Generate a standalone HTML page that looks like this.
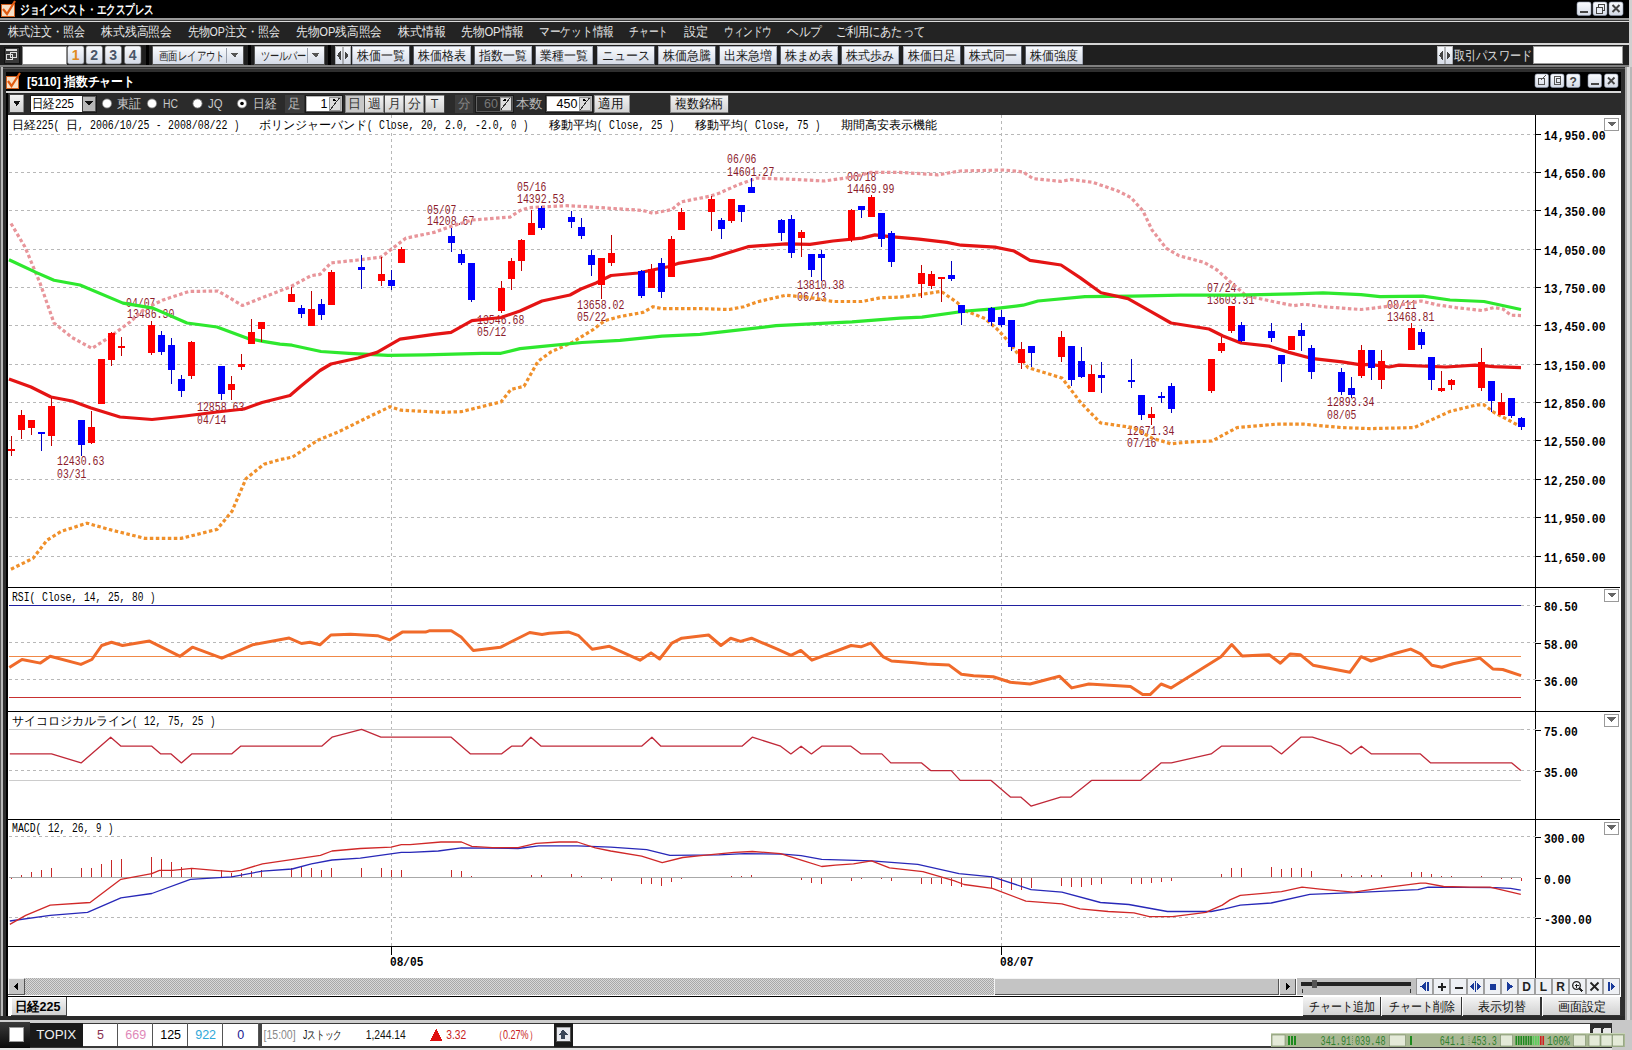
<!DOCTYPE html><html><head><meta charset="utf-8"><style>html,body{margin:0;padding:0;background:#000;overflow:hidden;width:1632px;height:1050px;}svg{display:block}</style></head><body>
<svg width="1632" height="1050" viewBox="0 0 1632 1050" shape-rendering="crispEdges">
<defs><pattern id="dith" width="2" height="2" patternUnits="userSpaceOnUse"><rect width="2" height="2" fill="#d8d8d8"/><rect width="1" height="1" fill="#a8a8a8"/><rect x="1" y="1" width="1" height="1" fill="#a8a8a8"/></pattern><linearGradient id="btn" x1="0" y1="0" x2="0" y2="1"><stop offset="0" stop-color="#fafcff"/><stop offset="1" stop-color="#d4dae6"/></linearGradient><linearGradient id="btn2" x1="0" y1="0" x2="0" y2="1"><stop offset="0" stop-color="#f4f4f4"/><stop offset="1" stop-color="#d0d0d0"/></linearGradient><linearGradient id="sbar" x1="0" y1="0" x2="0" y2="1"><stop offset="0" stop-color="#3a3a3a"/><stop offset="1" stop-color="#0a0a0a"/></linearGradient></defs>
<rect x="0" y="0" width="1632" height="18" fill="#000" />
<rect x="0" y="18" width="1632" height="1.5" fill="#9a9a9a" />
<rect x="0" y="19.5" width="1632" height="1" fill="#3a3a3a" />
<rect x="0" y="20.5" width="1632" height="1" fill="#dcdcdc" />
<rect x="0" y="21.5" width="1632" height="21.5" fill="#232323" />
<rect x="0" y="43" width="1632" height="2" fill="#d4d4d4" />
<rect x="0" y="45" width="1632" height="20" fill="#1f1f1f" />
<rect x="0" y="65" width="1632" height="2" fill="#808080" />
<rect x="1628.5" y="0" width="3.5" height="67" fill="#d0d0d0" />
<rect x="0" y="67" width="1632" height="983" fill="#2e2e2e" />
<rect x="0" y="67" width="1.3" height="983" fill="#5a5a5a" />
<rect x="1.3" y="67" width="1.3" height="983" fill="#b8b8b8" />
<rect x="1625" y="67" width="2" height="983" fill="#a8a8a8" />
<rect x="1627" y="67" width="2.5" height="983" fill="#dcdcdc" />
<rect x="1629.5" y="67" width="2.5" height="983" fill="#b8b8b8" />
<rect x="2.6" y="68" width="1622.4" height="1" fill="#555" />
<rect x="5.6" y="72" width="1615" height="19" fill="#000" />
<rect x="5.6" y="91" width="1615" height="1.5" fill="#d8d8d8" />
<rect x="5.6" y="92.5" width="1615" height="22.5" fill="#000" />
<rect x="8" y="92.5" width="1612.6" height="22.5" fill="#2b2b2b" />
<rect x="5.6" y="92.5" width="2.4" height="923.5" fill="#000" />
<rect x="8" y="115" width="1612.6" height="881" fill="#fff" />
<rect x="8" y="996" width="1612.6" height="20" fill="#fff" />
<rect x="0" y="1016" width="1625" height="4" fill="#2a2a2a" />
<rect x="0" y="1020" width="1632" height="2" fill="#c0c0c0" />
<rect x="0" y="1022" width="1632" height="28" fill="url(#sbar)"/>
<rect x="1" y="4" width="13" height="12" fill="#f6e0c8"/><rect x="1" y="4" width="13" height="12" fill="none" stroke="#d06020" stroke-width="1"/><path d="M3,9 L7,14 L15,1" fill="none" stroke="#e05a10" stroke-width="2.2" shape-rendering="auto"/>
<text x="20.00" y="13.50" font-family="'Liberation Sans',sans-serif" font-size="13" font-weight="bold" fill="#fff" textLength="134.00" lengthAdjust="spacingAndGlyphs">ジョインベスト・エクスプレス</text>
<rect x="1577" y="2" width="14" height="13.5" rx="2" fill="url(#btn)" stroke="#8a93a8" stroke-width="0.6" shape-rendering="auto"/>
<rect x="1580" y="11" width="8" height="2" fill="#444" />
<rect x="1593" y="2" width="14" height="13.5" rx="2" fill="url(#btn)" stroke="#8a93a8" stroke-width="0.6" shape-rendering="auto"/>
<rect x="1598" y="4.5" width="6" height="6" fill="none" stroke="#444" stroke-width="1"/><rect x="1596" y="7" width="6" height="6" fill="#e8ecf4" stroke="#444" stroke-width="1"/>
<rect x="1609" y="2" width="14" height="13.5" rx="2" fill="url(#btn)" stroke="#8a93a8" stroke-width="0.6" shape-rendering="auto"/>
<path d="M1612.5,5 L1619.5,12 M1619.5,5 L1612.5,12" stroke="#444" stroke-width="2" shape-rendering="auto"/>
<text x="7.50" y="36.00" font-family="'Liberation Sans',sans-serif" font-size="12.5" font-weight="normal" fill="#e6e6e6" textLength="77.50" lengthAdjust="spacingAndGlyphs">株式注文・照会</text>
<text x="101.00" y="36.00" font-family="'Liberation Sans',sans-serif" font-size="12.5" font-weight="normal" fill="#e6e6e6" textLength="71.00" lengthAdjust="spacingAndGlyphs">株式残高照会</text>
<text x="187.50" y="36.00" font-family="'Liberation Sans',sans-serif" font-size="12.5" font-weight="normal" fill="#e6e6e6" textLength="92.50" lengthAdjust="spacingAndGlyphs">先物OP注文・照会</text>
<text x="296.00" y="36.00" font-family="'Liberation Sans',sans-serif" font-size="12.5" font-weight="normal" fill="#e6e6e6" textLength="86.00" lengthAdjust="spacingAndGlyphs">先物OP残高照会</text>
<text x="398.00" y="36.00" font-family="'Liberation Sans',sans-serif" font-size="12.5" font-weight="normal" fill="#e6e6e6" textLength="48.00" lengthAdjust="spacingAndGlyphs">株式情報</text>
<text x="461.00" y="36.00" font-family="'Liberation Sans',sans-serif" font-size="12.5" font-weight="normal" fill="#e6e6e6" textLength="63.00" lengthAdjust="spacingAndGlyphs">先物OP情報</text>
<text x="539.00" y="36.00" font-family="'Liberation Sans',sans-serif" font-size="12.5" font-weight="normal" fill="#e6e6e6" textLength="75.00" lengthAdjust="spacingAndGlyphs">マーケット情報</text>
<text x="629.00" y="36.00" font-family="'Liberation Sans',sans-serif" font-size="12.5" font-weight="normal" fill="#e6e6e6" textLength="39.00" lengthAdjust="spacingAndGlyphs">チャート</text>
<text x="684.00" y="36.00" font-family="'Liberation Sans',sans-serif" font-size="12.5" font-weight="normal" fill="#e6e6e6" textLength="24.50" lengthAdjust="spacingAndGlyphs">設定</text>
<text x="724.00" y="36.00" font-family="'Liberation Sans',sans-serif" font-size="12.5" font-weight="normal" fill="#e6e6e6" textLength="48.00" lengthAdjust="spacingAndGlyphs">ウィンドウ</text>
<text x="787.00" y="36.00" font-family="'Liberation Sans',sans-serif" font-size="12.5" font-weight="normal" fill="#e6e6e6" textLength="35.00" lengthAdjust="spacingAndGlyphs">ヘルプ</text>
<text x="835.50" y="36.00" font-family="'Liberation Sans',sans-serif" font-size="12.5" font-weight="normal" fill="#e6e6e6" textLength="89.50" lengthAdjust="spacingAndGlyphs">ご利用にあたって</text>
<rect x="4" y="47" width="15" height="16" fill="#3a3a3a" stroke="#111" stroke-width="1"/><rect x="6" y="49" width="11" height="2" fill="#ddd"/><rect x="6" y="54" width="6" height="5" fill="none" stroke="#ddd" stroke-width="1"/><rect x="10" y="52" width="6" height="5" fill="none" stroke="#ddd" stroke-width="1"/>
<rect x="22.5" y="46" width="43.5" height="18" fill="#fff" stroke="#888" stroke-width="1"/>
<rect x="67.5" y="46" width="16.5" height="18" rx="2" fill="url(#btn)" stroke="#666" stroke-width="0.6" shape-rendering="auto"/>
<text x="75.75" y="60.00" font-family="'Liberation Sans',sans-serif" font-size="14" font-weight="bold" fill="#e08a20" text-anchor="middle">1</text>
<rect x="86" y="46" width="16.5" height="18" rx="2" fill="url(#btn)" stroke="#666" stroke-width="0.6" shape-rendering="auto"/>
<text x="94.25" y="60.00" font-family="'Liberation Sans',sans-serif" font-size="14" font-weight="bold" fill="#4a5668" text-anchor="middle">2</text>
<rect x="105" y="46" width="16.5" height="18" rx="2" fill="url(#btn)" stroke="#666" stroke-width="0.6" shape-rendering="auto"/>
<text x="113.25" y="60.00" font-family="'Liberation Sans',sans-serif" font-size="14" font-weight="bold" fill="#4a5668" text-anchor="middle">3</text>
<rect x="124.5" y="46" width="16.5" height="18" rx="2" fill="url(#btn)" stroke="#666" stroke-width="0.6" shape-rendering="auto"/>
<text x="132.75" y="60.00" font-family="'Liberation Sans',sans-serif" font-size="14" font-weight="bold" fill="#4a5668" text-anchor="middle">4</text>
<rect x="146" y="45" width="3" height="20" fill="#000" />
<rect x="247.6" y="45" width="3" height="20" fill="#000" />
<rect x="328" y="45" width="3" height="20" fill="#000" />
<rect x="152.9" y="46.4" width="90.1" height="18" fill="url(#btn)" stroke="#777" stroke-width="0.6"/>
<line x1="226.2" y1="48" x2="226.2" y2="63" stroke="#9aa0ac" stroke-width="1" />
<text x="158.90" y="59.90" font-family="'Liberation Sans',sans-serif" font-size="12" font-weight="normal" fill="#222" textLength="66.00" lengthAdjust="spacingAndGlyphs">画面レイアウト</text>
<path d="M230.2,52.5 L239.2,52.5 L234.7,57.5 Z" fill="#555"/>
<rect x="254.5" y="46.4" width="69.5" height="18" fill="url(#btn)" stroke="#777" stroke-width="0.6"/>
<line x1="307.3" y1="48" x2="307.3" y2="63" stroke="#9aa0ac" stroke-width="1" />
<text x="260.50" y="59.90" font-family="'Liberation Sans',sans-serif" font-size="12" font-weight="normal" fill="#222" textLength="46.00" lengthAdjust="spacingAndGlyphs">ツールバー</text>
<path d="M311.3,52.5 L320.3,52.5 L315.8,57.5 Z" fill="#555"/>
<rect x="335" y="46.4" width="7.5" height="18" fill="url(#btn)" stroke="#777" stroke-width="0.5"/><rect x="343" y="46.4" width="7.5" height="18" fill="url(#btn)" stroke="#777" stroke-width="0.5"/><path d="M340.5,51 L337,55.4 L340.5,60 Z" fill="#444"/><path d="M345,51 L348.5,55.4 L345,60 Z" fill="#444"/>
<rect x="352.3" y="46.4" width="57" height="18" fill="url(#btn)" stroke="#7a8090" stroke-width="0.6"/>
<text x="356.80" y="59.90" font-family="'Liberation Sans',sans-serif" font-size="12.5" font-weight="normal" fill="#1a1a1a" textLength="48.00" lengthAdjust="spacingAndGlyphs">株価一覧</text>
<rect x="413.5" y="46.4" width="57" height="18" fill="url(#btn)" stroke="#7a8090" stroke-width="0.6"/>
<text x="418.00" y="59.90" font-family="'Liberation Sans',sans-serif" font-size="12.5" font-weight="normal" fill="#1a1a1a" textLength="48.00" lengthAdjust="spacingAndGlyphs">株価格表</text>
<rect x="474.7" y="46.4" width="57" height="18" fill="url(#btn)" stroke="#7a8090" stroke-width="0.6"/>
<text x="479.20" y="59.90" font-family="'Liberation Sans',sans-serif" font-size="12.5" font-weight="normal" fill="#1a1a1a" textLength="48.00" lengthAdjust="spacingAndGlyphs">指数一覧</text>
<rect x="535.9" y="46.4" width="57" height="18" fill="url(#btn)" stroke="#7a8090" stroke-width="0.6"/>
<text x="540.40" y="59.90" font-family="'Liberation Sans',sans-serif" font-size="12.5" font-weight="normal" fill="#1a1a1a" textLength="48.00" lengthAdjust="spacingAndGlyphs">業種一覧</text>
<rect x="597.1" y="46.4" width="57" height="18" fill="url(#btn)" stroke="#7a8090" stroke-width="0.6"/>
<text x="601.60" y="59.90" font-family="'Liberation Sans',sans-serif" font-size="12.5" font-weight="normal" fill="#1a1a1a" textLength="48.00" lengthAdjust="spacingAndGlyphs">ニュース</text>
<rect x="658.3" y="46.4" width="57" height="18" fill="url(#btn)" stroke="#7a8090" stroke-width="0.6"/>
<text x="662.80" y="59.90" font-family="'Liberation Sans',sans-serif" font-size="12.5" font-weight="normal" fill="#1a1a1a" textLength="48.00" lengthAdjust="spacingAndGlyphs">株価急騰</text>
<rect x="719.5" y="46.4" width="57" height="18" fill="url(#btn)" stroke="#7a8090" stroke-width="0.6"/>
<text x="724.00" y="59.90" font-family="'Liberation Sans',sans-serif" font-size="12.5" font-weight="normal" fill="#1a1a1a" textLength="48.00" lengthAdjust="spacingAndGlyphs">出来急増</text>
<rect x="780.7" y="46.4" width="57" height="18" fill="url(#btn)" stroke="#7a8090" stroke-width="0.6"/>
<text x="785.20" y="59.90" font-family="'Liberation Sans',sans-serif" font-size="12.5" font-weight="normal" fill="#1a1a1a" textLength="48.00" lengthAdjust="spacingAndGlyphs">株まめ表</text>
<rect x="841.9" y="46.4" width="57" height="18" fill="url(#btn)" stroke="#7a8090" stroke-width="0.6"/>
<text x="846.40" y="59.90" font-family="'Liberation Sans',sans-serif" font-size="12.5" font-weight="normal" fill="#1a1a1a" textLength="48.00" lengthAdjust="spacingAndGlyphs">株式歩み</text>
<rect x="903.1" y="46.4" width="57" height="18" fill="url(#btn)" stroke="#7a8090" stroke-width="0.6"/>
<text x="907.60" y="59.90" font-family="'Liberation Sans',sans-serif" font-size="12.5" font-weight="normal" fill="#1a1a1a" textLength="48.00" lengthAdjust="spacingAndGlyphs">株価日足</text>
<rect x="964.3" y="46.4" width="57" height="18" fill="url(#btn)" stroke="#7a8090" stroke-width="0.6"/>
<text x="968.80" y="59.90" font-family="'Liberation Sans',sans-serif" font-size="12.5" font-weight="normal" fill="#1a1a1a" textLength="48.00" lengthAdjust="spacingAndGlyphs">株式同一</text>
<rect x="1025.5" y="46.4" width="57" height="18" fill="url(#btn)" stroke="#7a8090" stroke-width="0.6"/>
<text x="1030.00" y="59.90" font-family="'Liberation Sans',sans-serif" font-size="12.5" font-weight="normal" fill="#1a1a1a" textLength="48.00" lengthAdjust="spacingAndGlyphs">株価強度</text>
<rect x="1437" y="46.4" width="7.5" height="18" fill="url(#btn)" stroke="#777" stroke-width="0.5"/><rect x="1445" y="46.4" width="7.5" height="18" fill="url(#btn)" stroke="#777" stroke-width="0.5"/><path d="M1442.5,51 L1439,55.4 L1442.5,60 Z" fill="#444"/><path d="M1447,51 L1450.5,55.4 L1447,60 Z" fill="#444"/>
<text x="1454.00" y="59.90" font-family="'Liberation Sans',sans-serif" font-size="12.5" font-weight="normal" fill="#e0e0e0" textLength="78.00" lengthAdjust="spacingAndGlyphs">取引パスワード</text>
<rect x="1533.3" y="46.3" width="89.5" height="17.5" fill="#fff" stroke="#999" stroke-width="1"/>
<rect x="6" y="76" width="12" height="12" fill="#f6e0c8"/><rect x="6" y="76" width="12" height="12" fill="none" stroke="#d06020" stroke-width="1"/><path d="M8,81 L11.5,86 L20,73" fill="none" stroke="#e05a10" stroke-width="2.2" shape-rendering="auto"/>
<text x="27.00" y="85.50" font-family="'Liberation Sans',sans-serif" font-size="13" font-weight="bold" fill="#fff" textLength="108.00" lengthAdjust="spacingAndGlyphs">[5110] 指数チャート</text>
<rect x="1535" y="74" width="13.5" height="13.5" rx="2" fill="url(#btn)" stroke="#8a93a8" stroke-width="0.6" shape-rendering="auto"/>
<rect x="1538" y="78" width="6" height="6" fill="none" stroke="#555" stroke-width="1"/><path d="M1541,80 L1545.5,75.5" stroke="#555" stroke-width="1"/>
<rect x="1550.5" y="74" width="13.5" height="13.5" rx="2" fill="url(#btn)" stroke="#8a93a8" stroke-width="0.6" shape-rendering="auto"/>
<rect x="1554.0" y="76.5" width="6" height="8" fill="none" stroke="#555" stroke-width="1"/><rect x="1556.0" y="78.5" width="4" height="4" fill="none" stroke="#555" stroke-width="1"/>
<rect x="1566.5" y="74" width="13.5" height="13.5" rx="2" fill="url(#btn)" stroke="#8a93a8" stroke-width="0.6" shape-rendering="auto"/>
<text x="1573.25" y="85.50" font-family="'Liberation Sans',sans-serif" font-size="12" font-weight="bold" fill="#444" text-anchor="middle">?</text>
<rect x="1588" y="74" width="13.5" height="13.5" rx="2" fill="url(#btn)" stroke="#8a93a8" stroke-width="0.6" shape-rendering="auto"/>
<rect x="1591" y="83" width="7.5" height="2" fill="#444" />
<rect x="1604.5" y="74" width="13.5" height="13.5" rx="2" fill="url(#btn)" stroke="#8a93a8" stroke-width="0.6" shape-rendering="auto"/>
<path d="M1608.0,77.5 L1614.5,84 M1614.5,77.5 L1608.0,84" stroke="#444" stroke-width="1.8" shape-rendering="auto"/>
<rect x="9.8" y="94.5" width="14" height="17.5" fill="url(#btn2)" stroke="#555" stroke-width="0.6"/><path d="M13.3,101 L20.3,101 L16.8,106 Z" fill="#111"/>
<rect x="30" y="94.5" width="67" height="18" fill="#1a1a1a" />
<rect x="31" y="95.5" width="51" height="16" fill="#fff" />
<text x="32.00" y="107.50" font-family="'Liberation Sans',sans-serif" font-size="13" font-weight="normal" fill="#000" textLength="42.00" lengthAdjust="spacingAndGlyphs">日経225</text>
<rect x="82.5" y="96" width="13" height="15" fill="#b8b8b8" stroke="#444" stroke-width="0.8"/><path d="M84.8,101 L93.2,101 L89,106 Z" fill="#111"/>
<circle cx="107" cy="103.5" r="4.6" fill="#fff" stroke="#777" stroke-width="0.8" shape-rendering="auto"/>
<text x="117.00" y="108.00" font-family="'Liberation Sans',sans-serif" font-size="12.5" font-weight="normal" fill="#c8c8c8" textLength="24.50" lengthAdjust="spacingAndGlyphs">東証</text>
<circle cx="152" cy="103.5" r="4.6" fill="#fff" stroke="#777" stroke-width="0.8" shape-rendering="auto"/>
<text x="163.00" y="108.00" font-family="'Liberation Sans',sans-serif" font-size="12" font-weight="normal" fill="#c8c8c8" textLength="15.00" lengthAdjust="spacingAndGlyphs">HC</text>
<circle cx="197.5" cy="103.5" r="4.6" fill="#fff" stroke="#777" stroke-width="0.8" shape-rendering="auto"/>
<text x="208.00" y="108.00" font-family="'Liberation Sans',sans-serif" font-size="12" font-weight="normal" fill="#c8c8c8" textLength="14.50" lengthAdjust="spacingAndGlyphs">JQ</text>
<circle cx="242" cy="103.5" r="4.6" fill="#fff" stroke="#777" stroke-width="0.8" shape-rendering="auto"/>
<circle cx="242" cy="103.5" r="1.8" fill="#000" shape-rendering="auto"/>
<text x="252.80" y="108.00" font-family="'Liberation Sans',sans-serif" font-size="12.5" font-weight="normal" fill="#c8c8c8" textLength="23.50" lengthAdjust="spacingAndGlyphs">日経</text>
<rect x="284.5" y="95" width="19.5" height="18" fill="#3c3c3c" />
<text x="288.00" y="107.50" font-family="'Liberation Sans',sans-serif" font-size="12.5" font-weight="normal" fill="#bbb" textLength="12.50" lengthAdjust="spacingAndGlyphs">足</text>
<rect x="304.8" y="94.8" width="38.599999999999966" height="18" fill="#1a1a1a"/>
<rect x="306.3" y="96.3" width="35.599999999999966" height="15" fill="#fff" stroke="#888" stroke-width="0.6"/>
<text x="327.40" y="107.50" font-family="'Liberation Sans',sans-serif" font-size="12.5" font-weight="normal" fill="#000" text-anchor="end">1</text>
<rect x="329.4" y="97" width="11" height="13.5" fill="#ddd" stroke="#666" stroke-width="0.6"/><path d="M330.4,109.5 L339.4,98" stroke="#333" stroke-width="1"/><path d="M332.4,101 L334.2,98.5 L336.0,101 Z" fill="#000"/>
<rect x="345.4" y="95" width="18.600000000000023" height="17.8" fill="#c8c8c8" stroke="#555" stroke-width="0.6"/>
<text x="354.70" y="107.50" font-family="'Liberation Sans',sans-serif" font-size="12.5" font-weight="normal" fill="#333" text-anchor="middle">日</text>
<rect x="364.6" y="95" width="19.099999999999966" height="17.8" fill="url(#btn2)" stroke="#555" stroke-width="0.6"/>
<text x="374.15" y="107.50" font-family="'Liberation Sans',sans-serif" font-size="12.5" font-weight="normal" fill="#333" text-anchor="middle">週</text>
<rect x="384.8" y="95" width="18.69999999999999" height="17.8" fill="url(#btn2)" stroke="#555" stroke-width="0.6"/>
<text x="394.15" y="107.50" font-family="'Liberation Sans',sans-serif" font-size="12.5" font-weight="normal" fill="#333" text-anchor="middle">月</text>
<rect x="404.6" y="95" width="19.099999999999966" height="17.8" fill="url(#btn2)" stroke="#555" stroke-width="0.6"/>
<text x="414.15" y="107.50" font-family="'Liberation Sans',sans-serif" font-size="12.5" font-weight="normal" fill="#333" text-anchor="middle">分</text>
<rect x="425.2" y="95" width="18.80000000000001" height="17.8" fill="url(#btn2)" stroke="#555" stroke-width="0.6"/>
<text x="434.60" y="107.50" font-family="'Liberation Sans',sans-serif" font-size="12.5" font-weight="normal" fill="#333" text-anchor="middle">T</text>
<rect x="454.7" y="95" width="18.4" height="18" fill="#3c3c3c" />
<text x="457.50" y="107.50" font-family="'Liberation Sans',sans-serif" font-size="12.5" font-weight="normal" fill="#888" textLength="12.50" lengthAdjust="spacingAndGlyphs">分</text>
<rect x="474.5" y="94.8" width="39.5" height="18" fill="#1a1a1a"/>
<rect x="476.0" y="96.3" width="36.5" height="15" fill="#2a2a2a" stroke="#888" stroke-width="0.6"/>
<text x="498.00" y="107.50" font-family="'Liberation Sans',sans-serif" font-size="12.5" font-weight="normal" fill="#777" text-anchor="end">60</text>
<rect x="500" y="97" width="11" height="13.5" fill="#ddd" stroke="#666" stroke-width="0.6"/><path d="M501,109.5 L510,98" stroke="#333" stroke-width="1"/><path d="M503,101 L504.8,98.5 L506.6,101 Z" fill="#000"/>
<text x="515.50" y="107.50" font-family="'Liberation Sans',sans-serif" font-size="12.5" font-weight="normal" fill="#b8b8b8" textLength="27.00" lengthAdjust="spacingAndGlyphs">本数</text>
<rect x="545" y="94.8" width="48.39999999999998" height="18" fill="#1a1a1a"/>
<rect x="546.5" y="96.3" width="45.39999999999998" height="15" fill="#fff" stroke="#888" stroke-width="0.6"/>
<text x="577.40" y="107.50" font-family="'Liberation Sans',sans-serif" font-size="12.5" font-weight="normal" fill="#000" text-anchor="end">450</text>
<rect x="579.4" y="97" width="11" height="13.5" fill="#ddd" stroke="#666" stroke-width="0.6"/><path d="M580.4,109.5 L589.4,98" stroke="#333" stroke-width="1"/><path d="M582.4,101 L584.1999999999999,98.5 L586.0,101 Z" fill="#000"/>
<rect x="594.3" y="95" width="35.2" height="17.8" fill="url(#btn2)" stroke="#555" stroke-width="0.6"/>
<text x="598.00" y="107.50" font-family="'Liberation Sans',sans-serif" font-size="12.5" font-weight="normal" fill="#111" textLength="25.00" lengthAdjust="spacingAndGlyphs">適用</text>
<rect x="670.4" y="95" width="57.7" height="17.8" fill="url(#btn2)" stroke="#555" stroke-width="0.6"/>
<text x="675.00" y="107.50" font-family="'Liberation Sans',sans-serif" font-size="12.5" font-weight="normal" fill="#111" textLength="48.00" lengthAdjust="spacingAndGlyphs">複数銘柄</text>
<line x1="9" y1="134.5" x2="1535.5" y2="134.5" stroke="#b8b8b8" stroke-width="1" stroke-dasharray="3 3"/>
<line x1="1535.5" y1="134.5" x2="1541" y2="134.5" stroke="#000" stroke-width="1" />
<text x="1544.00" y="139.50" font-family="'Liberation Mono',monospace" font-size="13" font-weight="bold" fill="#000" textLength="61.50" lengthAdjust="spacingAndGlyphs">14,950.00</text>
<line x1="9" y1="172.5" x2="1535.5" y2="172.5" stroke="#b8b8b8" stroke-width="1" stroke-dasharray="3 3"/>
<line x1="1535.5" y1="172.5" x2="1541" y2="172.5" stroke="#000" stroke-width="1" />
<text x="1544.00" y="177.50" font-family="'Liberation Mono',monospace" font-size="13" font-weight="bold" fill="#000" textLength="61.50" lengthAdjust="spacingAndGlyphs">14,650.00</text>
<line x1="9" y1="210.5" x2="1535.5" y2="210.5" stroke="#b8b8b8" stroke-width="1" stroke-dasharray="3 3"/>
<line x1="1535.5" y1="210.5" x2="1541" y2="210.5" stroke="#000" stroke-width="1" />
<text x="1544.00" y="215.50" font-family="'Liberation Mono',monospace" font-size="13" font-weight="bold" fill="#000" textLength="61.50" lengthAdjust="spacingAndGlyphs">14,350.00</text>
<line x1="9" y1="249.5" x2="1535.5" y2="249.5" stroke="#b8b8b8" stroke-width="1" stroke-dasharray="3 3"/>
<line x1="1535.5" y1="249.5" x2="1541" y2="249.5" stroke="#000" stroke-width="1" />
<text x="1544.00" y="254.50" font-family="'Liberation Mono',monospace" font-size="13" font-weight="bold" fill="#000" textLength="61.50" lengthAdjust="spacingAndGlyphs">14,050.00</text>
<line x1="9" y1="287.5" x2="1535.5" y2="287.5" stroke="#b8b8b8" stroke-width="1" stroke-dasharray="3 3"/>
<line x1="1535.5" y1="287.5" x2="1541" y2="287.5" stroke="#000" stroke-width="1" />
<text x="1544.00" y="292.50" font-family="'Liberation Mono',monospace" font-size="13" font-weight="bold" fill="#000" textLength="61.50" lengthAdjust="spacingAndGlyphs">13,750.00</text>
<line x1="9" y1="325.5" x2="1535.5" y2="325.5" stroke="#b8b8b8" stroke-width="1" stroke-dasharray="3 3"/>
<line x1="1535.5" y1="325.5" x2="1541" y2="325.5" stroke="#000" stroke-width="1" />
<text x="1544.00" y="330.50" font-family="'Liberation Mono',monospace" font-size="13" font-weight="bold" fill="#000" textLength="61.50" lengthAdjust="spacingAndGlyphs">13,450.00</text>
<line x1="9" y1="364.5" x2="1535.5" y2="364.5" stroke="#b8b8b8" stroke-width="1" stroke-dasharray="3 3"/>
<line x1="1535.5" y1="364.5" x2="1541" y2="364.5" stroke="#000" stroke-width="1" />
<text x="1544.00" y="369.50" font-family="'Liberation Mono',monospace" font-size="13" font-weight="bold" fill="#000" textLength="61.50" lengthAdjust="spacingAndGlyphs">13,150.00</text>
<line x1="9" y1="402.5" x2="1535.5" y2="402.5" stroke="#b8b8b8" stroke-width="1" stroke-dasharray="3 3"/>
<line x1="1535.5" y1="402.5" x2="1541" y2="402.5" stroke="#000" stroke-width="1" />
<text x="1544.00" y="407.50" font-family="'Liberation Mono',monospace" font-size="13" font-weight="bold" fill="#000" textLength="61.50" lengthAdjust="spacingAndGlyphs">12,850.00</text>
<line x1="9" y1="440.5" x2="1535.5" y2="440.5" stroke="#b8b8b8" stroke-width="1" stroke-dasharray="3 3"/>
<line x1="1535.5" y1="440.5" x2="1541" y2="440.5" stroke="#000" stroke-width="1" />
<text x="1544.00" y="445.50" font-family="'Liberation Mono',monospace" font-size="13" font-weight="bold" fill="#000" textLength="61.50" lengthAdjust="spacingAndGlyphs">12,550.00</text>
<line x1="9" y1="479.5" x2="1535.5" y2="479.5" stroke="#b8b8b8" stroke-width="1" stroke-dasharray="3 3"/>
<line x1="1535.5" y1="479.5" x2="1541" y2="479.5" stroke="#000" stroke-width="1" />
<text x="1544.00" y="484.50" font-family="'Liberation Mono',monospace" font-size="13" font-weight="bold" fill="#000" textLength="61.50" lengthAdjust="spacingAndGlyphs">12,250.00</text>
<line x1="9" y1="517.5" x2="1535.5" y2="517.5" stroke="#b8b8b8" stroke-width="1" stroke-dasharray="3 3"/>
<line x1="1535.5" y1="517.5" x2="1541" y2="517.5" stroke="#000" stroke-width="1" />
<text x="1544.00" y="522.50" font-family="'Liberation Mono',monospace" font-size="13" font-weight="bold" fill="#000" textLength="61.50" lengthAdjust="spacingAndGlyphs">11,950.00</text>
<line x1="9" y1="556.5" x2="1535.5" y2="556.5" stroke="#b8b8b8" stroke-width="1" stroke-dasharray="3 3"/>
<line x1="1535.5" y1="556.5" x2="1541" y2="556.5" stroke="#000" stroke-width="1" />
<text x="1544.00" y="561.50" font-family="'Liberation Mono',monospace" font-size="13" font-weight="bold" fill="#000" textLength="61.50" lengthAdjust="spacingAndGlyphs">11,650.00</text>
<line x1="391.5" y1="115" x2="391.5" y2="946" stroke="#b8b8b8" stroke-width="1" stroke-dasharray="3 3"/>
<line x1="391.5" y1="946" x2="391.5" y2="955" stroke="#000" stroke-width="1" />
<line x1="1001.5" y1="115" x2="1001.5" y2="946" stroke="#b8b8b8" stroke-width="1" stroke-dasharray="3 3"/>
<line x1="1001.5" y1="946" x2="1001.5" y2="955" stroke="#000" stroke-width="1" />
<line x1="1535.5" y1="115" x2="1535.5" y2="978" stroke="#000" stroke-width="1" />
<line x1="8" y1="587.5" x2="1620" y2="587.5" stroke="#000" stroke-width="1" />
<line x1="8" y1="711.5" x2="1620" y2="711.5" stroke="#000" stroke-width="1" />
<line x1="8" y1="819.5" x2="1620" y2="819.5" stroke="#000" stroke-width="1" />
<line x1="8" y1="946.5" x2="1620" y2="946.5" stroke="#000" stroke-width="1" />
<text x="12.00" y="128.50" font-family="'Liberation Sans',sans-serif" font-size="12" font-weight="normal" fill="#000" textLength="24.00" lengthAdjust="spacingAndGlyphs">日経</text><text x="36.00" y="128.50" font-family="'Liberation Mono',monospace" font-size="13.5" font-weight="normal" fill="#000" textLength="23.40" lengthAdjust="spacingAndGlyphs">225(</text><text x="66.00" y="128.50" font-family="'Liberation Sans',sans-serif" font-size="12" font-weight="normal" fill="#000" textLength="12.00" lengthAdjust="spacingAndGlyphs">日</text><text x="78.00" y="128.50" font-family="'Liberation Mono',monospace" font-size="13.5" font-weight="normal" fill="#000" textLength="5.40" lengthAdjust="spacingAndGlyphs">,</text><text x="90.00" y="128.50" font-family="'Liberation Mono',monospace" font-size="13.5" font-weight="normal" fill="#000" textLength="59.40" lengthAdjust="spacingAndGlyphs">2006/10/25</text><text x="156.00" y="128.50" font-family="'Liberation Mono',monospace" font-size="13.5" font-weight="normal" fill="#000" textLength="5.40" lengthAdjust="spacingAndGlyphs">-</text><text x="168.00" y="128.50" font-family="'Liberation Mono',monospace" font-size="13.5" font-weight="normal" fill="#000" textLength="59.40" lengthAdjust="spacingAndGlyphs">2008/08/22</text><text x="234.00" y="128.50" font-family="'Liberation Mono',monospace" font-size="13.5" font-weight="normal" fill="#000" textLength="5.40" lengthAdjust="spacingAndGlyphs">)</text>
<text x="259.00" y="128.50" font-family="'Liberation Sans',sans-serif" font-size="12" font-weight="normal" fill="#000" textLength="108.00" lengthAdjust="spacingAndGlyphs">ボリンジャーバンド</text><text x="367.00" y="128.50" font-family="'Liberation Mono',monospace" font-size="13.5" font-weight="normal" fill="#000" textLength="5.40" lengthAdjust="spacingAndGlyphs">(</text><text x="379.00" y="128.50" font-family="'Liberation Mono',monospace" font-size="13.5" font-weight="normal" fill="#000" textLength="35.40" lengthAdjust="spacingAndGlyphs">Close,</text><text x="421.00" y="128.50" font-family="'Liberation Mono',monospace" font-size="13.5" font-weight="normal" fill="#000" textLength="17.40" lengthAdjust="spacingAndGlyphs">20,</text><text x="445.00" y="128.50" font-family="'Liberation Mono',monospace" font-size="13.5" font-weight="normal" fill="#000" textLength="23.40" lengthAdjust="spacingAndGlyphs">2.0,</text><text x="475.00" y="128.50" font-family="'Liberation Mono',monospace" font-size="13.5" font-weight="normal" fill="#000" textLength="29.40" lengthAdjust="spacingAndGlyphs">-2.0,</text><text x="511.00" y="128.50" font-family="'Liberation Mono',monospace" font-size="13.5" font-weight="normal" fill="#000" textLength="5.40" lengthAdjust="spacingAndGlyphs">0</text><text x="523.00" y="128.50" font-family="'Liberation Mono',monospace" font-size="13.5" font-weight="normal" fill="#000" textLength="5.40" lengthAdjust="spacingAndGlyphs">)</text>
<text x="549.00" y="128.50" font-family="'Liberation Sans',sans-serif" font-size="12" font-weight="normal" fill="#000" textLength="48.00" lengthAdjust="spacingAndGlyphs">移動平均</text><text x="597.00" y="128.50" font-family="'Liberation Mono',monospace" font-size="13.5" font-weight="normal" fill="#000" textLength="5.40" lengthAdjust="spacingAndGlyphs">(</text><text x="609.00" y="128.50" font-family="'Liberation Mono',monospace" font-size="13.5" font-weight="normal" fill="#000" textLength="35.40" lengthAdjust="spacingAndGlyphs">Close,</text><text x="651.00" y="128.50" font-family="'Liberation Mono',monospace" font-size="13.5" font-weight="normal" fill="#000" textLength="11.40" lengthAdjust="spacingAndGlyphs">25</text><text x="669.00" y="128.50" font-family="'Liberation Mono',monospace" font-size="13.5" font-weight="normal" fill="#000" textLength="5.40" lengthAdjust="spacingAndGlyphs">)</text>
<text x="695.00" y="128.50" font-family="'Liberation Sans',sans-serif" font-size="12" font-weight="normal" fill="#000" textLength="48.00" lengthAdjust="spacingAndGlyphs">移動平均</text><text x="743.00" y="128.50" font-family="'Liberation Mono',monospace" font-size="13.5" font-weight="normal" fill="#000" textLength="5.40" lengthAdjust="spacingAndGlyphs">(</text><text x="755.00" y="128.50" font-family="'Liberation Mono',monospace" font-size="13.5" font-weight="normal" fill="#000" textLength="35.40" lengthAdjust="spacingAndGlyphs">Close,</text><text x="797.00" y="128.50" font-family="'Liberation Mono',monospace" font-size="13.5" font-weight="normal" fill="#000" textLength="11.40" lengthAdjust="spacingAndGlyphs">75</text><text x="815.00" y="128.50" font-family="'Liberation Mono',monospace" font-size="13.5" font-weight="normal" fill="#000" textLength="5.40" lengthAdjust="spacingAndGlyphs">)</text>
<text x="841.00" y="128.50" font-family="'Liberation Sans',sans-serif" font-size="12" font-weight="normal" fill="#000" textLength="96.00" lengthAdjust="spacingAndGlyphs">期間高安表示機能</text>
<rect x="1604.5" y="118.5" width="14" height="12" fill="#fff" stroke="#9a9a9a" stroke-width="1"/><path d="M1606.5,121.5 L1616.5,121.5 L1611.5,126.5 Z" fill="#666"/>
<rect x="1604.5" y="589.5" width="14" height="12" fill="#fff" stroke="#9a9a9a" stroke-width="1"/><path d="M1606.5,592.5 L1616.5,592.5 L1611.5,597.5 Z" fill="#666"/>
<rect x="1604.5" y="714" width="14" height="12" fill="#fff" stroke="#9a9a9a" stroke-width="1"/><path d="M1606.5,717 L1616.5,717 L1611.5,722 Z" fill="#666"/>
<rect x="1604.5" y="822" width="14" height="12" fill="#fff" stroke="#9a9a9a" stroke-width="1"/><path d="M1606.5,825 L1616.5,825 L1611.5,830 Z" fill="#666"/>
<text x="57.00" y="465.30" font-family="'Liberation Mono',monospace" font-size="12.5" font-weight="normal" fill="#8c1c2c" textLength="47.40" lengthAdjust="spacingAndGlyphs">12430.63</text>
<text x="57.00" y="478.30" font-family="'Liberation Mono',monospace" font-size="12.5" font-weight="normal" fill="#8c1c2c" textLength="29.40" lengthAdjust="spacingAndGlyphs">03/31</text>
<text x="126.00" y="306.80" font-family="'Liberation Mono',monospace" font-size="12.5" font-weight="normal" fill="#8c1c2c" textLength="29.40" lengthAdjust="spacingAndGlyphs">04/07</text>
<text x="127.00" y="318.30" font-family="'Liberation Mono',monospace" font-size="12.5" font-weight="normal" fill="#8c1c2c" textLength="47.40" lengthAdjust="spacingAndGlyphs">13486.30</text>
<text x="197.00" y="411.30" font-family="'Liberation Mono',monospace" font-size="12.5" font-weight="normal" fill="#8c1c2c" textLength="47.40" lengthAdjust="spacingAndGlyphs">12858.63</text>
<text x="197.00" y="423.80" font-family="'Liberation Mono',monospace" font-size="12.5" font-weight="normal" fill="#8c1c2c" textLength="29.40" lengthAdjust="spacingAndGlyphs">04/14</text>
<text x="427.00" y="213.80" font-family="'Liberation Mono',monospace" font-size="12.5" font-weight="normal" fill="#8c1c2c" textLength="29.40" lengthAdjust="spacingAndGlyphs">05/07</text>
<text x="427.00" y="225.30" font-family="'Liberation Mono',monospace" font-size="12.5" font-weight="normal" fill="#8c1c2c" textLength="47.40" lengthAdjust="spacingAndGlyphs">14208.67</text>
<text x="477.00" y="324.30" font-family="'Liberation Mono',monospace" font-size="12.5" font-weight="normal" fill="#8c1c2c" textLength="47.40" lengthAdjust="spacingAndGlyphs">13546.68</text>
<text x="477.00" y="335.80" font-family="'Liberation Mono',monospace" font-size="12.5" font-weight="normal" fill="#8c1c2c" textLength="29.40" lengthAdjust="spacingAndGlyphs">05/12</text>
<text x="517.00" y="191.30" font-family="'Liberation Mono',monospace" font-size="12.5" font-weight="normal" fill="#8c1c2c" textLength="29.40" lengthAdjust="spacingAndGlyphs">05/16</text>
<text x="517.00" y="203.30" font-family="'Liberation Mono',monospace" font-size="12.5" font-weight="normal" fill="#8c1c2c" textLength="47.40" lengthAdjust="spacingAndGlyphs">14392.53</text>
<text x="577.00" y="309.30" font-family="'Liberation Mono',monospace" font-size="12.5" font-weight="normal" fill="#8c1c2c" textLength="47.40" lengthAdjust="spacingAndGlyphs">13658.02</text>
<text x="577.00" y="321.30" font-family="'Liberation Mono',monospace" font-size="12.5" font-weight="normal" fill="#8c1c2c" textLength="29.40" lengthAdjust="spacingAndGlyphs">05/22</text>
<text x="727.00" y="163.30" font-family="'Liberation Mono',monospace" font-size="12.5" font-weight="normal" fill="#8c1c2c" textLength="29.40" lengthAdjust="spacingAndGlyphs">06/06</text>
<text x="727.00" y="175.80" font-family="'Liberation Mono',monospace" font-size="12.5" font-weight="normal" fill="#8c1c2c" textLength="47.40" lengthAdjust="spacingAndGlyphs">14601.27</text>
<text x="847.00" y="181.30" font-family="'Liberation Mono',monospace" font-size="12.5" font-weight="normal" fill="#8c1c2c" textLength="29.40" lengthAdjust="spacingAndGlyphs">06/18</text>
<text x="847.00" y="192.80" font-family="'Liberation Mono',monospace" font-size="12.5" font-weight="normal" fill="#8c1c2c" textLength="47.40" lengthAdjust="spacingAndGlyphs">14469.99</text>
<text x="797.00" y="289.30" font-family="'Liberation Mono',monospace" font-size="12.5" font-weight="normal" fill="#8c1c2c" textLength="47.40" lengthAdjust="spacingAndGlyphs">13810.38</text>
<text x="797.00" y="300.80" font-family="'Liberation Mono',monospace" font-size="12.5" font-weight="normal" fill="#8c1c2c" textLength="29.40" lengthAdjust="spacingAndGlyphs">06/13</text>
<text x="1127.00" y="434.80" font-family="'Liberation Mono',monospace" font-size="12.5" font-weight="normal" fill="#8c1c2c" textLength="47.40" lengthAdjust="spacingAndGlyphs">12671.34</text>
<text x="1127.00" y="447.30" font-family="'Liberation Mono',monospace" font-size="12.5" font-weight="normal" fill="#8c1c2c" textLength="29.40" lengthAdjust="spacingAndGlyphs">07/16</text>
<text x="1207.00" y="291.80" font-family="'Liberation Mono',monospace" font-size="12.5" font-weight="normal" fill="#8c1c2c" textLength="29.40" lengthAdjust="spacingAndGlyphs">07/24</text>
<text x="1207.00" y="304.30" font-family="'Liberation Mono',monospace" font-size="12.5" font-weight="normal" fill="#8c1c2c" textLength="47.40" lengthAdjust="spacingAndGlyphs">13603.31</text>
<text x="1327.00" y="406.30" font-family="'Liberation Mono',monospace" font-size="12.5" font-weight="normal" fill="#8c1c2c" textLength="47.40" lengthAdjust="spacingAndGlyphs">12893.34</text>
<text x="1327.00" y="418.80" font-family="'Liberation Mono',monospace" font-size="12.5" font-weight="normal" fill="#8c1c2c" textLength="29.40" lengthAdjust="spacingAndGlyphs">08/05</text>
<text x="1387.00" y="309.30" font-family="'Liberation Mono',monospace" font-size="12.5" font-weight="normal" fill="#8c1c2c" textLength="29.40" lengthAdjust="spacingAndGlyphs">08/11</text>
<text x="1387.00" y="321.30" font-family="'Liberation Mono',monospace" font-size="12.5" font-weight="normal" fill="#8c1c2c" textLength="47.40" lengthAdjust="spacingAndGlyphs">13468.81</text>
<g shape-rendering="auto">
<polyline points="11.0,223.5 25.0,247.0 40.0,283.0 54.0,323.0 72.0,337.5 92.0,348.4 109.0,337.5 130.0,322.0 145.0,308.6 163.0,300.0 189.0,291.5 218.0,291.0 242.5,305.5 264.0,297.0 290.0,287.0 311.0,275.7 320.0,274.3 331.0,262.9 358.0,260.0 381.0,257.1 396.0,245.7 406.0,238.1 434.0,232.4 453.0,225.7 472.0,220.0 510.0,217.1 520.0,210.5 529.0,207.6 567.0,205.7 586.0,206.7 615.0,208.6 643.0,210.5 653.0,213.3 672.0,209.5 681.0,201.9 710.0,196.2 719.0,193.3 738.0,184.8 757.0,178.1 795.0,179.4 824.0,181.0 852.0,177.1 871.0,172.4 900.0,172.4 938.0,174.8 960.0,171.0 1004.0,170.0 1023.0,171.9 1033.0,178.6 1061.0,181.4 1071.0,179.5 1093.0,182.4 1118.0,191.0 1131.0,197.6 1143.0,211.0 1152.0,230.0 1166.0,248.1 1179.0,255.7 1204.0,262.4 1217.0,270.0 1232.0,283.3 1246.0,295.7 1275.0,301.9 1294.0,305.7 1304.0,304.2 1323.0,306.7 1348.0,308.6 1361.0,309.5 1370.0,308.6 1408.0,303.8 1421.0,301.0 1437.0,304.8 1456.0,307.6 1482.0,310.5 1494.0,307.6 1503.0,309.1 1511.0,315.2 1521.0,315.6" fill="none" stroke="#e8959a" stroke-width="3.2" stroke-linejoin="round" stroke-dasharray="3.5 2.5" stroke-linecap="butt"/>
<polyline points="11.0,569.2 33.0,558.3 47.0,540.2 61.5,531.2 87.0,523.2 109.0,529.4 145.0,538.4 181.0,538.4 217.0,529.4 232.0,511.3 246.0,478.7 264.0,464.2 280.0,459.6 292.5,457.1 317.5,440.4 338.0,432.1 367.5,417.5 390.0,406.7 401.0,410.2 442.5,412.3 461.0,411.7 501.0,401.9 511.0,389.4 524.0,386.3 538.0,361.3 551.0,351.9 572.0,342.5 592.5,330.0 605.0,320.6 620.0,316.5 643.0,312.4 653.0,306.7 662.0,308.6 700.0,308.6 729.0,309.5 744.0,306.7 757.0,301.9 786.0,295.2 814.0,298.1 833.0,301.5 862.0,301.5 881.0,297.7 900.0,297.1 919.0,294.8 941.0,291.3 957.0,302.4 966.0,311.0 985.0,318.6 997.0,329.0 1009.0,341.9 1028.0,367.6 1062.0,378.1 1081.0,402.9 1100.5,422.9 1133.0,427.6 1152.0,438.1 1171.0,443.8 1190.0,441.9 1212.0,441.0 1237.0,427.6 1275.0,424.2 1304.0,424.2 1342.0,427.6 1370.0,428.6 1414.0,427.6 1427.0,421.9 1450.0,411.4 1477.0,404.8 1484.0,404.8 1494.0,412.4 1519.0,425.7" fill="none" stroke="#f0902a" stroke-width="3.2" stroke-linejoin="round" stroke-dasharray="3.5 2.5" stroke-linecap="butt"/>
<polyline points="9.0,259.7 36.0,272.4 54.0,280.3 80.0,285.0 123.0,303.1 153.0,308.1 187.0,323.0 217.0,327.0 248.0,338.6 263.0,341.4 280.0,344.2 292.0,345.2 321.0,351.5 349.0,353.3 388.0,355.4 425.0,354.9 482.0,353.3 501.0,353.3 520.0,348.6 540.0,346.7 582.0,342.5 620.0,340.4 662.0,336.2 700.0,334.3 776.0,325.7 852.0,321.9 900.0,318.1 922.0,317.2 966.0,311.0 990.0,309.1 1023.0,305.2 1038.0,301.0 1085.0,296.6 1133.0,296.2 1180.0,295.2 1237.0,295.2 1294.0,293.9 1323.0,292.8 1361.0,294.7 1380.0,296.6 1423.0,296.2 1450.0,300.0 1484.0,301.5 1521.0,309.5" fill="none" stroke="#2ee82e" stroke-width="3.2" stroke-linejoin="round" />
<polyline points="9.0,379.0 31.0,387.0 51.0,397.0 72.0,401.0 91.0,408.0 120.0,417.0 152.0,419.5 185.0,416.0 217.0,412.0 244.0,409.0 262.0,402.5 290.0,395.5 301.0,386.0 320.0,370.5 331.0,364.0 358.0,358.0 377.0,352.4 400.0,339.2 434.0,334.3 451.0,332.3 472.0,320.6 501.0,317.5 520.0,311.0 542.0,301.0 570.0,295.0 581.0,289.0 596.0,283.0 611.0,275.5 638.0,273.0 668.0,266.7 678.0,263.4 711.0,258.1 748.0,246.7 786.0,243.8 810.0,244.4 833.0,241.0 862.0,238.1 875.0,234.9 890.0,236.7 919.0,239.1 947.0,242.4 961.0,245.2 995.0,247.1 1014.0,251.0 1030.0,260.3 1061.0,265.0 1080.0,277.6 1101.0,292.8 1128.0,298.6 1151.0,311.6 1171.0,323.0 1190.0,326.0 1209.0,329.0 1223.0,336.0 1241.0,343.0 1269.0,346.1 1289.0,352.4 1313.0,358.7 1342.0,361.9 1361.0,364.8 1370.0,364.4 1389.0,367.0 1399.0,365.1 1446.0,367.0 1475.0,365.1 1494.0,366.7 1521.0,367.6" fill="none" stroke="#e41414" stroke-width="3.2" stroke-linejoin="round" />
</g>
<rect x="11" y="436" width="1" height="20" fill="#c00000" />
<rect x="8" y="449" width="7" height="2" fill="#ff0000" />
<rect x="21" y="410" width="1" height="29" fill="#c00000" />
<rect x="18" y="415" width="7" height="15" fill="#ff0000" />
<rect x="31" y="420" width="1" height="15" fill="#c00000" />
<rect x="28" y="420" width="7" height="8" fill="#ff0000" />
<rect x="41" y="432" width="1" height="19" fill="#0000c0" />
<rect x="38" y="432" width="7" height="2" fill="#0000ff" />
<rect x="51" y="398" width="1" height="48" fill="#c00000" />
<rect x="48" y="406" width="7" height="30" fill="#ff0000" />
<rect x="81" y="420" width="1" height="36" fill="#0000c0" />
<rect x="78" y="420" width="7" height="25" fill="#0000ff" />
<rect x="91" y="411" width="1" height="33" fill="#c00000" />
<rect x="88" y="427" width="7" height="16" fill="#ff0000" />
<rect x="101" y="359" width="1" height="45" fill="#c00000" />
<rect x="98" y="359" width="7" height="45" fill="#ff0000" />
<rect x="111" y="332" width="1" height="34" fill="#c00000" />
<rect x="108" y="333" width="7" height="27" fill="#ff0000" />
<rect x="121" y="337" width="1" height="19" fill="#c00000" />
<rect x="118" y="346" width="7" height="2" fill="#ff0000" />
<rect x="151" y="321" width="1" height="34" fill="#c00000" />
<rect x="148" y="325" width="7" height="28" fill="#ff0000" />
<rect x="161" y="331" width="1" height="24" fill="#0000c0" />
<rect x="158" y="335" width="7" height="17" fill="#0000ff" />
<rect x="171" y="338" width="1" height="46" fill="#0000c0" />
<rect x="168" y="345" width="7" height="25" fill="#0000ff" />
<rect x="181" y="375" width="1" height="22" fill="#0000c0" />
<rect x="178" y="379" width="7" height="12" fill="#0000ff" />
<rect x="191" y="341" width="1" height="38" fill="#c00000" />
<rect x="188" y="342" width="7" height="34" fill="#ff0000" />
<rect x="221" y="366" width="1" height="34" fill="#0000c0" />
<rect x="218" y="366" width="7" height="28" fill="#0000ff" />
<rect x="231" y="376" width="1" height="24" fill="#c00000" />
<rect x="228" y="384" width="7" height="6" fill="#ff0000" />
<rect x="241" y="354" width="1" height="16" fill="#c00000" />
<rect x="238" y="364" width="7" height="3" fill="#ff0000" />
<rect x="251" y="319" width="1" height="25" fill="#c00000" />
<rect x="248" y="332" width="7" height="12" fill="#ff0000" />
<rect x="261" y="322" width="1" height="20" fill="#c00000" />
<rect x="258" y="322" width="7" height="7" fill="#ff0000" />
<rect x="291" y="287" width="1" height="15" fill="#c00000" />
<rect x="288" y="294" width="7" height="8" fill="#ff0000" />
<rect x="301" y="305" width="1" height="13" fill="#0000c0" />
<rect x="298" y="308" width="7" height="6" fill="#0000ff" />
<rect x="311" y="291" width="1" height="35" fill="#c00000" />
<rect x="308" y="309" width="7" height="17" fill="#ff0000" />
<rect x="321" y="299" width="1" height="21" fill="#0000c0" />
<rect x="318" y="304" width="7" height="11" fill="#0000ff" />
<rect x="331" y="270" width="1" height="35" fill="#c00000" />
<rect x="328" y="272" width="7" height="33" fill="#ff0000" />
<rect x="361" y="255" width="1" height="34" fill="#0000c0" />
<rect x="358" y="267" width="7" height="3" fill="#0000ff" />
<rect x="381" y="257" width="1" height="29" fill="#c00000" />
<rect x="378" y="274" width="7" height="7" fill="#ff0000" />
<rect x="391" y="270" width="1" height="20" fill="#0000c0" />
<rect x="388" y="280" width="7" height="6" fill="#0000ff" />
<rect x="401" y="247" width="1" height="16" fill="#c00000" />
<rect x="398" y="249" width="7" height="14" fill="#ff0000" />
<rect x="451" y="228" width="1" height="24" fill="#0000c0" />
<rect x="448" y="236" width="7" height="7" fill="#0000ff" />
<rect x="461" y="250" width="1" height="15" fill="#0000c0" />
<rect x="458" y="254" width="7" height="9" fill="#0000ff" />
<rect x="471" y="263" width="1" height="39" fill="#0000c0" />
<rect x="468" y="263" width="7" height="37" fill="#0000ff" />
<rect x="501" y="281" width="1" height="32" fill="#c00000" />
<rect x="498" y="288" width="7" height="23" fill="#ff0000" />
<rect x="511" y="258" width="1" height="32" fill="#c00000" />
<rect x="508" y="261" width="7" height="18" fill="#ff0000" />
<rect x="521" y="239" width="1" height="32" fill="#c00000" />
<rect x="518" y="240" width="7" height="21" fill="#ff0000" />
<rect x="531" y="210" width="1" height="25" fill="#c00000" />
<rect x="528" y="223" width="7" height="12" fill="#ff0000" />
<rect x="541" y="206" width="1" height="24" fill="#0000c0" />
<rect x="538" y="208" width="7" height="20" fill="#0000ff" />
<rect x="571" y="211" width="1" height="17" fill="#0000c0" />
<rect x="568" y="217" width="7" height="5" fill="#0000ff" />
<rect x="581" y="218" width="1" height="21" fill="#0000c0" />
<rect x="578" y="227" width="7" height="9" fill="#0000ff" />
<rect x="591" y="250" width="1" height="26" fill="#0000c0" />
<rect x="588" y="255" width="7" height="10" fill="#0000ff" />
<rect x="601" y="258" width="1" height="41" fill="#c00000" />
<rect x="598" y="258" width="7" height="27" fill="#ff0000" />
<rect x="611" y="235" width="1" height="31" fill="#c00000" />
<rect x="608" y="253" width="7" height="10" fill="#ff0000" />
<rect x="641" y="270" width="1" height="28" fill="#0000c0" />
<rect x="638" y="271" width="7" height="25" fill="#0000ff" />
<rect x="651" y="264" width="1" height="24" fill="#c00000" />
<rect x="648" y="269" width="7" height="19" fill="#ff0000" />
<rect x="661" y="258" width="1" height="40" fill="#0000c0" />
<rect x="658" y="263" width="7" height="29" fill="#0000ff" />
<rect x="671" y="236" width="1" height="41" fill="#c00000" />
<rect x="668" y="239" width="7" height="38" fill="#ff0000" />
<rect x="681" y="208" width="1" height="22" fill="#c00000" />
<rect x="678" y="212" width="7" height="18" fill="#ff0000" />
<rect x="711" y="196" width="1" height="35" fill="#c00000" />
<rect x="708" y="199" width="7" height="13" fill="#ff0000" />
<rect x="721" y="218" width="1" height="21" fill="#0000c0" />
<rect x="718" y="220" width="7" height="9" fill="#0000ff" />
<rect x="731" y="199" width="1" height="24" fill="#c00000" />
<rect x="728" y="199" width="7" height="22" fill="#ff0000" />
<rect x="741" y="205" width="1" height="17" fill="#0000c0" />
<rect x="738" y="205" width="7" height="7" fill="#0000ff" />
<rect x="751" y="178" width="1" height="15" fill="#0000c0" />
<rect x="748" y="187" width="7" height="6" fill="#0000ff" />
<rect x="781" y="219" width="1" height="22" fill="#0000c0" />
<rect x="778" y="220" width="7" height="13" fill="#0000ff" />
<rect x="791" y="215" width="1" height="43" fill="#0000c0" />
<rect x="788" y="219" width="7" height="34" fill="#0000ff" />
<rect x="801" y="230" width="1" height="27" fill="#c00000" />
<rect x="798" y="232" width="7" height="6" fill="#ff0000" />
<rect x="811" y="254" width="1" height="23" fill="#0000c0" />
<rect x="808" y="254" width="7" height="16" fill="#0000ff" />
<rect x="821" y="250" width="1" height="31" fill="#0000c0" />
<rect x="818" y="254" width="7" height="4" fill="#0000ff" />
<rect x="851" y="209" width="1" height="33" fill="#c00000" />
<rect x="848" y="210" width="7" height="30" fill="#ff0000" />
<rect x="861" y="206" width="1" height="12" fill="#0000c0" />
<rect x="858" y="206" width="7" height="4" fill="#0000ff" />
<rect x="871" y="195" width="1" height="22" fill="#c00000" />
<rect x="868" y="197" width="7" height="20" fill="#ff0000" />
<rect x="881" y="213" width="1" height="34" fill="#0000c0" />
<rect x="878" y="213" width="7" height="26" fill="#0000ff" />
<rect x="891" y="231" width="1" height="36" fill="#0000c0" />
<rect x="888" y="233" width="7" height="29" fill="#0000ff" />
<rect x="921" y="265" width="1" height="33" fill="#c00000" />
<rect x="918" y="273" width="7" height="11" fill="#ff0000" />
<rect x="931" y="271" width="1" height="18" fill="#c00000" />
<rect x="928" y="274" width="7" height="12" fill="#ff0000" />
<rect x="941" y="277" width="1" height="25" fill="#c00000" />
<rect x="938" y="277" width="7" height="2" fill="#ff0000" />
<rect x="951" y="261" width="1" height="20" fill="#0000c0" />
<rect x="948" y="275" width="7" height="4" fill="#0000ff" />
<rect x="961" y="305" width="1" height="20" fill="#0000c0" />
<rect x="958" y="305" width="7" height="8" fill="#0000ff" />
<rect x="991" y="307" width="1" height="19" fill="#0000c0" />
<rect x="988" y="308" width="7" height="14" fill="#0000ff" />
<rect x="1001" y="310" width="1" height="17" fill="#0000c0" />
<rect x="998" y="317" width="7" height="8" fill="#0000ff" />
<rect x="1011" y="320" width="1" height="31" fill="#0000c0" />
<rect x="1008" y="320" width="7" height="27" fill="#0000ff" />
<rect x="1021" y="342" width="1" height="27" fill="#c00000" />
<rect x="1018" y="349" width="7" height="14" fill="#ff0000" />
<rect x="1031" y="346" width="1" height="21" fill="#0000c0" />
<rect x="1028" y="346" width="7" height="7" fill="#0000ff" />
<rect x="1061" y="331" width="1" height="31" fill="#c00000" />
<rect x="1058" y="337" width="7" height="20" fill="#ff0000" />
<rect x="1071" y="346" width="1" height="40" fill="#0000c0" />
<rect x="1068" y="346" width="7" height="34" fill="#0000ff" />
<rect x="1081" y="347" width="1" height="31" fill="#0000c0" />
<rect x="1078" y="361" width="7" height="16" fill="#0000ff" />
<rect x="1091" y="365" width="1" height="27" fill="#c00000" />
<rect x="1088" y="374" width="7" height="18" fill="#ff0000" />
<rect x="1101" y="362" width="1" height="31" fill="#0000c0" />
<rect x="1098" y="375" width="7" height="3" fill="#0000ff" />
<rect x="1131" y="359" width="1" height="29" fill="#0000c0" />
<rect x="1128" y="380" width="7" height="2" fill="#0000ff" />
<rect x="1141" y="395" width="1" height="25" fill="#0000c0" />
<rect x="1138" y="395" width="7" height="20" fill="#0000ff" />
<rect x="1151" y="407" width="1" height="18" fill="#c00000" />
<rect x="1148" y="414" width="7" height="4" fill="#ff0000" />
<rect x="1161" y="392" width="1" height="11" fill="#0000c0" />
<rect x="1158" y="396" width="7" height="2" fill="#0000ff" />
<rect x="1171" y="383" width="1" height="30" fill="#0000c0" />
<rect x="1168" y="386" width="7" height="23" fill="#0000ff" />
<rect x="1211" y="359" width="1" height="34" fill="#c00000" />
<rect x="1208" y="359" width="7" height="32" fill="#ff0000" />
<rect x="1221" y="337" width="1" height="16" fill="#c00000" />
<rect x="1218" y="343" width="7" height="8" fill="#ff0000" />
<rect x="1231" y="306" width="1" height="27" fill="#c00000" />
<rect x="1228" y="306" width="7" height="25" fill="#ff0000" />
<rect x="1241" y="322" width="1" height="20" fill="#0000c0" />
<rect x="1238" y="325" width="7" height="16" fill="#0000ff" />
<rect x="1271" y="323" width="1" height="19" fill="#0000c0" />
<rect x="1268" y="331" width="7" height="7" fill="#0000ff" />
<rect x="1281" y="355" width="1" height="27" fill="#0000c0" />
<rect x="1278" y="355" width="7" height="9" fill="#0000ff" />
<rect x="1291" y="336" width="1" height="14" fill="#c00000" />
<rect x="1288" y="336" width="7" height="14" fill="#ff0000" />
<rect x="1301" y="323" width="1" height="28" fill="#0000c0" />
<rect x="1298" y="330" width="7" height="6" fill="#0000ff" />
<rect x="1311" y="345" width="1" height="34" fill="#0000c0" />
<rect x="1308" y="348" width="7" height="24" fill="#0000ff" />
<rect x="1341" y="368" width="1" height="27" fill="#0000c0" />
<rect x="1338" y="372" width="7" height="20" fill="#0000ff" />
<rect x="1351" y="377" width="1" height="21" fill="#0000c0" />
<rect x="1348" y="388" width="7" height="7" fill="#0000ff" />
<rect x="1361" y="345" width="1" height="33" fill="#c00000" />
<rect x="1358" y="350" width="7" height="26" fill="#ff0000" />
<rect x="1371" y="350" width="1" height="30" fill="#0000c0" />
<rect x="1368" y="350" width="7" height="18" fill="#0000ff" />
<rect x="1381" y="350" width="1" height="39" fill="#c00000" />
<rect x="1378" y="361" width="7" height="19" fill="#ff0000" />
<rect x="1411" y="323" width="1" height="27" fill="#c00000" />
<rect x="1408" y="328" width="7" height="22" fill="#ff0000" />
<rect x="1421" y="329" width="1" height="20" fill="#0000c0" />
<rect x="1418" y="332" width="7" height="13" fill="#0000ff" />
<rect x="1431" y="357" width="1" height="33" fill="#0000c0" />
<rect x="1428" y="357" width="7" height="23" fill="#0000ff" />
<rect x="1441" y="371" width="1" height="21" fill="#c00000" />
<rect x="1438" y="388" width="7" height="3" fill="#ff0000" />
<rect x="1451" y="379" width="1" height="11" fill="#c00000" />
<rect x="1448" y="380" width="7" height="5" fill="#ff0000" />
<rect x="1481" y="348" width="1" height="43" fill="#c00000" />
<rect x="1478" y="362" width="7" height="26" fill="#ff0000" />
<rect x="1491" y="381" width="1" height="31" fill="#0000c0" />
<rect x="1488" y="381" width="7" height="20" fill="#0000ff" />
<rect x="1501" y="393" width="1" height="22" fill="#c00000" />
<rect x="1498" y="402" width="7" height="13" fill="#ff0000" />
<rect x="1511" y="398" width="1" height="20" fill="#0000c0" />
<rect x="1508" y="398" width="7" height="18" fill="#0000ff" />
<rect x="1521" y="417" width="1" height="13" fill="#0000c0" />
<rect x="1518" y="418" width="7" height="9" fill="#0000ff" />
<text x="12.00" y="600.50" font-family="'Liberation Mono',monospace" font-size="13.5" font-weight="normal" fill="#000" textLength="23.40" lengthAdjust="spacingAndGlyphs">RSI(</text><text x="42.00" y="600.50" font-family="'Liberation Mono',monospace" font-size="13.5" font-weight="normal" fill="#000" textLength="35.40" lengthAdjust="spacingAndGlyphs">Close,</text><text x="84.00" y="600.50" font-family="'Liberation Mono',monospace" font-size="13.5" font-weight="normal" fill="#000" textLength="17.40" lengthAdjust="spacingAndGlyphs">14,</text><text x="108.00" y="600.50" font-family="'Liberation Mono',monospace" font-size="13.5" font-weight="normal" fill="#000" textLength="17.40" lengthAdjust="spacingAndGlyphs">25,</text><text x="132.00" y="600.50" font-family="'Liberation Mono',monospace" font-size="13.5" font-weight="normal" fill="#000" textLength="11.40" lengthAdjust="spacingAndGlyphs">80</text><text x="150.00" y="600.50" font-family="'Liberation Mono',monospace" font-size="13.5" font-weight="normal" fill="#000" textLength="5.40" lengthAdjust="spacingAndGlyphs">)</text>
<line x1="9" y1="605.5" x2="1521" y2="605.5" stroke="#2020a0" stroke-width="1.2" />
<line x1="1521" y1="605.5" x2="1535.5" y2="605.5" stroke="#b8b8b8" stroke-width="1" stroke-dasharray="3 3"/>
<line x1="9" y1="642.5" x2="1535.5" y2="642.5" stroke="#b8b8b8" stroke-width="1" stroke-dasharray="3 3"/>
<line x1="9" y1="656.5" x2="1521" y2="656.5" stroke="#f08848" stroke-width="1" />
<line x1="9" y1="679.5" x2="1535.5" y2="679.5" stroke="#b8b8b8" stroke-width="1" stroke-dasharray="3 3"/>
<line x1="9" y1="697.5" x2="1521" y2="697.5" stroke="#c83030" stroke-width="1.2" />
<line x1="1535.5" y1="606.5" x2="1541" y2="606.5" stroke="#000" stroke-width="1" />
<text x="1544.00" y="611.00" font-family="'Liberation Mono',monospace" font-size="13" font-weight="bold" fill="#000" textLength="33.90" lengthAdjust="spacingAndGlyphs">80.50</text>
<line x1="1535.5" y1="643.5" x2="1541" y2="643.5" stroke="#000" stroke-width="1" />
<text x="1544.00" y="648.50" font-family="'Liberation Mono',monospace" font-size="13" font-weight="bold" fill="#000" textLength="33.90" lengthAdjust="spacingAndGlyphs">58.00</text>
<line x1="1535.5" y1="680.5" x2="1541" y2="680.5" stroke="#000" stroke-width="1" />
<text x="1544.00" y="685.50" font-family="'Liberation Mono',monospace" font-size="13" font-weight="bold" fill="#000" textLength="33.90" lengthAdjust="spacingAndGlyphs">36.00</text>
<g shape-rendering="auto">
<polyline points="9.3,667.5 22.0,659.5 40.4,663.1 50.2,656.3 80.9,664.4 91.9,659.5 101.7,645.5 111.5,642.3 122.5,645.5 149.5,641.1 180.1,656.3 192.4,647.2 221.8,658.2 252.5,644.8 289.2,638.1 301.5,643.5 310.0,642.3 319.9,644.8 330.9,635.0 350.5,634.2 377.5,635.7 389.7,639.9 402.3,632.1 425.5,632.1 429.2,630.8 451.3,630.8 461.1,637.0 473.3,650.4 500.3,647.3 529.7,632.5 542.0,634.5 549.3,633.3 568.9,632.1 578.7,635.7 592.2,649.2 609.4,646.3 640.0,660.2 651.0,652.9 659.6,659.0 671.9,643.1 681.7,638.2 708.6,635.0 720.9,645.5 730.7,638.2 740.5,641.4 751.5,638.2 777.3,649.2 791.0,655.3 800.8,650.4 811.9,660.2 851.1,645.5 860.9,646.8 870.7,643.1 882.9,656.6 891.5,661.0 914.8,662.7 927.1,663.9 949.1,665.1 961.4,674.2 973.6,675.7 993.2,676.7 1010.4,682.3 1030.0,684.0 1059.4,676.2 1071.7,687.9 1088.8,684.0 1130.5,686.5 1142.7,694.6 1150.1,694.6 1161.1,684.0 1170.9,687.9 1221.0,656.7 1231.7,644.5 1242.2,655.9 1257.8,655.3 1269.1,654.7 1280.4,663.2 1290.3,653.9 1300.2,654.7 1313.0,665.2 1349.8,672.3 1361.1,656.7 1371.0,661.0 1396.5,653.0 1410.7,649.1 1420.6,653.9 1431.9,665.2 1441.8,667.2 1453.1,663.8 1480.0,658.1 1492.8,668.9 1502.7,669.5 1521.1,675.7" fill="none" stroke="#f06a2a" stroke-width="3" stroke-linejoin="round" />
</g>
<text x="12.00" y="724.50" font-family="'Liberation Sans',sans-serif" font-size="12" font-weight="normal" fill="#000" textLength="120.00" lengthAdjust="spacingAndGlyphs">サイコロジカルライン</text><text x="132.00" y="724.50" font-family="'Liberation Mono',monospace" font-size="13.5" font-weight="normal" fill="#000" textLength="5.40" lengthAdjust="spacingAndGlyphs">(</text><text x="144.00" y="724.50" font-family="'Liberation Mono',monospace" font-size="13.5" font-weight="normal" fill="#000" textLength="17.40" lengthAdjust="spacingAndGlyphs">12,</text><text x="168.00" y="724.50" font-family="'Liberation Mono',monospace" font-size="13.5" font-weight="normal" fill="#000" textLength="17.40" lengthAdjust="spacingAndGlyphs">75,</text><text x="192.00" y="724.50" font-family="'Liberation Mono',monospace" font-size="13.5" font-weight="normal" fill="#000" textLength="11.40" lengthAdjust="spacingAndGlyphs">25</text><text x="210.00" y="724.50" font-family="'Liberation Mono',monospace" font-size="13.5" font-weight="normal" fill="#000" textLength="5.40" lengthAdjust="spacingAndGlyphs">)</text>
<line x1="9" y1="729.5" x2="1521" y2="729.5" stroke="#cccccc" stroke-width="1" />
<line x1="1521" y1="729.5" x2="1535.5" y2="729.5" stroke="#b8b8b8" stroke-width="1" stroke-dasharray="3 3"/>
<line x1="9" y1="770.5" x2="1535.5" y2="770.5" stroke="#b8b8b8" stroke-width="1" stroke-dasharray="3 3"/>
<line x1="9" y1="780.5" x2="1521" y2="780.5" stroke="#cccccc" stroke-width="1" />
<line x1="1535.5" y1="730.5" x2="1541" y2="730.5" stroke="#000" stroke-width="1" />
<text x="1544.00" y="735.50" font-family="'Liberation Mono',monospace" font-size="13" font-weight="bold" fill="#000" textLength="33.90" lengthAdjust="spacingAndGlyphs">75.00</text>
<line x1="1535.5" y1="771.5" x2="1541" y2="771.5" stroke="#000" stroke-width="1" />
<text x="1544.00" y="776.50" font-family="'Liberation Mono',monospace" font-size="13" font-weight="bold" fill="#000" textLength="33.90" lengthAdjust="spacingAndGlyphs">35.00</text>
<g shape-rendering="auto">
<polyline points="9.8,753.9 51.5,753.9 81.1,762.9 110.7,737.2 121.0,746.2 151.8,746.2 160.8,753.9 171.1,753.9 181.4,762.9 191.7,753.9 231.6,753.9 240.6,746.2 321.7,746.2 332.0,737.2 361.6,729.4 380.9,737.2 451.2,737.2 470.5,753.9 501.4,753.9 511.6,746.2 521.9,746.2 530.9,737.2 541.2,746.2 641.6,746.2 651.9,737.2 660.9,746.2 742.0,746.2 752.3,737.2 780.6,746.2 790.9,753.9 801.1,746.2 811.4,753.9 821.7,746.2 850.9,746.2 861.2,753.9 881.8,753.9 890.8,762.9 921.6,762.9 930.7,770.6 951.2,770.6 960.2,780.4 991.1,780.4 1010.4,797.1 1020.7,797.1 1031.0,806.1 1060.6,797.1 1070.9,797.1 1091.5,780.4 1140.4,780.4 1161.0,762.9 1171.3,762.9 1211.1,753.9 1221.4,746.2 1271.2,746.2 1281.5,753.9 1300.8,737.2 1312.4,737.2 1340.7,746.2 1351.0,753.9 1361.3,746.2 1371.5,753.9 1420.4,753.9 1430.7,762.9 1511.8,762.9 1520.8,770.6" fill="none" stroke="#c02838" stroke-width="1.3" stroke-linejoin="round" />
</g>
<text x="12.00" y="832.00" font-family="'Liberation Mono',monospace" font-size="13.5" font-weight="normal" fill="#000" textLength="29.40" lengthAdjust="spacingAndGlyphs">MACD(</text><text x="48.00" y="832.00" font-family="'Liberation Mono',monospace" font-size="13.5" font-weight="normal" fill="#000" textLength="17.40" lengthAdjust="spacingAndGlyphs">12,</text><text x="72.00" y="832.00" font-family="'Liberation Mono',monospace" font-size="13.5" font-weight="normal" fill="#000" textLength="17.40" lengthAdjust="spacingAndGlyphs">26,</text><text x="96.00" y="832.00" font-family="'Liberation Mono',monospace" font-size="13.5" font-weight="normal" fill="#000" textLength="5.40" lengthAdjust="spacingAndGlyphs">9</text><text x="108.00" y="832.00" font-family="'Liberation Mono',monospace" font-size="13.5" font-weight="normal" fill="#000" textLength="5.40" lengthAdjust="spacingAndGlyphs">)</text>
<line x1="9" y1="836.5" x2="1535.5" y2="836.5" stroke="#b8b8b8" stroke-width="1" stroke-dasharray="3 3"/>
<line x1="9" y1="877.5" x2="1521" y2="877.5" stroke="#a8a8a8" stroke-width="1" />
<line x1="9" y1="917.5" x2="1535.5" y2="917.5" stroke="#b8b8b8" stroke-width="1" stroke-dasharray="3 3"/>
<line x1="1535.5" y1="837.5" x2="1541" y2="837.5" stroke="#000" stroke-width="1" />
<text x="1544.00" y="842.50" font-family="'Liberation Mono',monospace" font-size="13" font-weight="bold" fill="#000" textLength="40.80" lengthAdjust="spacingAndGlyphs">300.00</text>
<line x1="1535.5" y1="878.5" x2="1541" y2="878.5" stroke="#000" stroke-width="1" />
<text x="1544.00" y="883.50" font-family="'Liberation Mono',monospace" font-size="13" font-weight="bold" fill="#000" textLength="27.00" lengthAdjust="spacingAndGlyphs">0.00</text>
<line x1="1535.5" y1="918.5" x2="1541" y2="918.5" stroke="#000" stroke-width="1" />
<text x="1544.00" y="923.50" font-family="'Liberation Mono',monospace" font-size="13" font-weight="bold" fill="#000" textLength="47.70" lengthAdjust="spacingAndGlyphs">-300.00</text>
<rect x="11" y="878" width="1.3" height="1" fill="#c82828" />
<rect x="21" y="875" width="1.3" height="2" fill="#c82828" />
<rect x="31" y="872" width="1.3" height="5" fill="#c82828" />
<rect x="41" y="870" width="1.3" height="7" fill="#c82828" />
<rect x="51" y="868" width="1.3" height="9" fill="#c82828" />
<rect x="81" y="868" width="1.3" height="9" fill="#c82828" />
<rect x="91" y="868" width="1.3" height="9" fill="#c82828" />
<rect x="101" y="864" width="1.3" height="13" fill="#c82828" />
<rect x="111" y="860" width="1.3" height="17" fill="#c82828" />
<rect x="121" y="859" width="1.3" height="18" fill="#c82828" />
<rect x="151" y="857" width="1.3" height="20" fill="#c82828" />
<rect x="161" y="859" width="1.3" height="18" fill="#c82828" />
<rect x="171" y="862" width="1.3" height="15" fill="#c82828" />
<rect x="181" y="867" width="1.3" height="10" fill="#c82828" />
<rect x="191" y="868" width="1.3" height="9" fill="#c82828" />
<rect x="221" y="870" width="1.3" height="7" fill="#c82828" />
<rect x="231" y="873" width="1.3" height="4" fill="#c82828" />
<rect x="241" y="873" width="1.3" height="4" fill="#c82828" />
<rect x="251" y="871" width="1.3" height="6" fill="#c82828" />
<rect x="261" y="870" width="1.3" height="7" fill="#c82828" />
<rect x="291" y="868" width="1.3" height="9" fill="#c82828" />
<rect x="301" y="866" width="1.3" height="11" fill="#c82828" />
<rect x="311" y="868" width="1.3" height="9" fill="#c82828" />
<rect x="321" y="870" width="1.3" height="7" fill="#c82828" />
<rect x="331" y="868" width="1.3" height="9" fill="#c82828" />
<rect x="361" y="868" width="1.3" height="9" fill="#c82828" />
<rect x="381" y="868" width="1.3" height="9" fill="#c82828" />
<rect x="391" y="870" width="1.3" height="7" fill="#c82828" />
<rect x="401" y="870" width="1.3" height="7" fill="#c82828" />
<rect x="451" y="870" width="1.3" height="7" fill="#c82828" />
<rect x="461" y="871" width="1.3" height="6" fill="#c82828" />
<rect x="471" y="876" width="1.3" height="1" fill="#c82828" />
<rect x="531" y="875" width="1.3" height="2" fill="#c82828" />
<rect x="541" y="875" width="1.3" height="2" fill="#c82828" />
<rect x="571" y="874" width="1.3" height="3" fill="#c82828" />
<rect x="581" y="876" width="1.3" height="1" fill="#c82828" />
<rect x="601" y="878" width="1.3" height="1" fill="#c82828" />
<rect x="611" y="878" width="1.3" height="3" fill="#c82828" />
<rect x="641" y="878" width="1.3" height="6" fill="#c82828" />
<rect x="651" y="878" width="1.3" height="6" fill="#c82828" />
<rect x="661" y="878" width="1.3" height="8" fill="#c82828" />
<rect x="671" y="878" width="1.3" height="4" fill="#c82828" />
<rect x="681" y="878" width="1.3" height="1" fill="#c82828" />
<rect x="731" y="876" width="1.3" height="1" fill="#c82828" />
<rect x="741" y="876" width="1.3" height="1" fill="#c82828" />
<rect x="751" y="875" width="1.3" height="2" fill="#c82828" />
<rect x="801" y="878" width="1.3" height="2" fill="#c82828" />
<rect x="811" y="878" width="1.3" height="5" fill="#c82828" />
<rect x="821" y="878" width="1.3" height="6" fill="#c82828" />
<rect x="851" y="878" width="1.3" height="3" fill="#c82828" />
<rect x="861" y="878" width="1.3" height="1" fill="#c82828" />
<rect x="881" y="878" width="1.3" height="1" fill="#c82828" />
<rect x="891" y="878" width="1.3" height="3" fill="#c82828" />
<rect x="921" y="878" width="1.3" height="6" fill="#c82828" />
<rect x="931" y="878" width="1.3" height="6" fill="#c82828" />
<rect x="941" y="878" width="1.3" height="6" fill="#c82828" />
<rect x="951" y="878" width="1.3" height="8" fill="#c82828" />
<rect x="961" y="878" width="1.3" height="9" fill="#c82828" />
<rect x="991" y="878" width="1.3" height="10" fill="#c82828" />
<rect x="1001" y="878" width="1.3" height="10" fill="#c82828" />
<rect x="1011" y="878" width="1.3" height="12" fill="#c82828" />
<rect x="1021" y="878" width="1.3" height="12" fill="#c82828" />
<rect x="1031" y="878" width="1.3" height="10" fill="#c82828" />
<rect x="1061" y="878" width="1.3" height="8" fill="#c82828" />
<rect x="1071" y="878" width="1.3" height="9" fill="#c82828" />
<rect x="1081" y="878" width="1.3" height="9" fill="#c82828" />
<rect x="1091" y="878" width="1.3" height="7" fill="#c82828" />
<rect x="1101" y="878" width="1.3" height="6" fill="#c82828" />
<rect x="1131" y="878" width="1.3" height="6" fill="#c82828" />
<rect x="1141" y="878" width="1.3" height="6" fill="#c82828" />
<rect x="1151" y="878" width="1.3" height="5" fill="#c82828" />
<rect x="1161" y="878" width="1.3" height="4" fill="#c82828" />
<rect x="1171" y="878" width="1.3" height="3" fill="#c82828" />
<rect x="1221" y="874" width="1.3" height="3" fill="#c82828" />
<rect x="1231" y="868" width="1.3" height="9" fill="#c82828" />
<rect x="1241" y="868" width="1.3" height="9" fill="#c82828" />
<rect x="1271" y="867" width="1.3" height="10" fill="#c82828" />
<rect x="1281" y="869" width="1.3" height="8" fill="#c82828" />
<rect x="1291" y="868" width="1.3" height="9" fill="#c82828" />
<rect x="1301" y="868" width="1.3" height="9" fill="#c82828" />
<rect x="1311" y="871" width="1.3" height="6" fill="#c82828" />
<rect x="1341" y="874" width="1.3" height="3" fill="#c82828" />
<rect x="1351" y="876" width="1.3" height="1" fill="#c82828" />
<rect x="1361" y="875" width="1.3" height="2" fill="#c82828" />
<rect x="1371" y="875" width="1.3" height="2" fill="#c82828" />
<rect x="1381" y="875" width="1.3" height="2" fill="#c82828" />
<rect x="1411" y="872" width="1.3" height="5" fill="#c82828" />
<rect x="1421" y="872" width="1.3" height="5" fill="#c82828" />
<rect x="1431" y="874" width="1.3" height="3" fill="#c82828" />
<rect x="1441" y="876" width="1.3" height="1" fill="#c82828" />
<rect x="1451" y="876" width="1.3" height="1" fill="#c82828" />
<rect x="1481" y="876" width="1.3" height="1" fill="#c82828" />
<rect x="1501" y="878" width="1.3" height="1" fill="#c82828" />
<rect x="1511" y="878" width="1.3" height="1" fill="#c82828" />
<rect x="1521" y="878" width="1.3" height="3" fill="#c82828" />
<g shape-rendering="auto">
<polyline points="9.8,921.0 50.2,915.4 87.5,912.3 120.9,897.9 151.8,893.5 190.4,879.3 231.6,876.8 262.5,871.1 292.1,869.0 311.4,863.9 332.0,860.0 360.3,858.2 401.4,852.3 410.0,852.3 438.3,851.0 461.5,847.9 518.1,848.5 538.7,845.9 577.3,845.9 610.7,847.2 646.7,849.7 669.9,855.4 718.8,854.9 744.5,853.6 783.1,854.1 801.1,855.7 821.7,859.3 871.5,860.8 917.8,864.4 959.0,873.7 992.4,876.8 1031.0,889.6 1061.9,892.2 1100.5,902.5 1128.8,904.5 1167.4,911.5 1211.1,911.5 1224.9,908.9 1240.3,905.1 1271.2,903.0 1309.8,894.3 1353.5,892.7 1417.9,889.6 1428.2,887.1 1495.1,887.6 1510.5,888.3 1520.8,890.1" fill="none" stroke="#2828b8" stroke-width="1.3" stroke-linejoin="round" />
<polyline points="9.8,924.4 25.7,915.4 50.2,905.1 90.1,902.5 120.9,879.3 151.8,873.7 159.5,870.3 172.4,870.3 191.7,868.3 214.9,870.3 231.6,871.6 240.6,870.3 262.5,863.9 320.4,855.4 332.0,851.0 360.3,848.5 391.1,847.2 401.4,844.6 410.0,844.6 440.9,842.0 461.5,842.0 471.8,846.4 492.3,847.7 518.1,847.7 536.1,843.3 559.3,842.0 577.3,842.0 595.3,847.9 610.7,851.0 641.6,856.2 662.2,862.6 682.8,857.5 700.8,855.7 734.2,852.3 752.3,851.5 780.6,853.6 803.7,860.8 821.7,866.5 835.4,865.2 853.5,863.9 871.5,860.8 889.5,867.8 922.9,871.6 953.8,880.6 964.1,884.5 992.4,888.3 1025.9,901.2 1061.9,903.8 1079.9,908.9 1108.2,911.5 1133.9,912.8 1149.4,916.6 1172.5,916.6 1206.0,912.3 1212.0,909.7 1222.3,905.1 1230.0,899.9 1240.3,895.3 1281.5,891.7 1302.1,887.1 1320.1,889.1 1353.5,892.2 1379.3,888.3 1420.4,883.2 1425.6,883.2 1443.6,886.5 1469.3,887.1 1489.9,887.1 1520.8,894.3" fill="none" stroke="#d02828" stroke-width="1.3" stroke-linejoin="round" />
</g>
<text x="390.00" y="965.50" font-family="'Liberation Mono',monospace" font-size="13" font-weight="bold" fill="#000" textLength="33.40" lengthAdjust="spacingAndGlyphs">08/05</text>
<text x="1000.00" y="965.50" font-family="'Liberation Mono',monospace" font-size="13" font-weight="bold" fill="#000" textLength="33.40" lengthAdjust="spacingAndGlyphs">08/07</text>
<rect x="8" y="978" width="1288" height="17" fill="url(#dith)"/>
<rect x="8" y="978.5" width="16" height="16" fill="#c4c4c4"/><path d="M8,994.5 L8,978.5 L24,978.5" fill="none" stroke="#f4f4f4" stroke-width="1"/><path d="M8,994.5 L24,994.5 L24,978.5" fill="none" stroke="#555" stroke-width="1"/>
<path d="M18.0,982.5 L13.5,986.5 L18.0,990.5 Z" fill="#000"/>
<rect x="994.5" y="978.5" width="284" height="16" fill="#c4c4c4"/><path d="M994.5,994.5 L994.5,978.5 L1278.5,978.5" fill="none" stroke="#f4f4f4" stroke-width="1"/><path d="M994.5,994.5 L1278.5,994.5 L1278.5,978.5" fill="none" stroke="#555" stroke-width="1"/>
<rect x="1279.5" y="978.5" width="16" height="16" fill="#c4c4c4"/><path d="M1279.5,994.5 L1279.5,978.5 L1295.5,978.5" fill="none" stroke="#f4f4f4" stroke-width="1"/><path d="M1279.5,994.5 L1295.5,994.5 L1295.5,978.5" fill="none" stroke="#555" stroke-width="1"/>
<path d="M1285.5,982.5 L1290.0,986.5 L1285.5,990.5 Z" fill="#000"/>
<rect x="1296.5" y="978" width="120" height="17" fill="#c0c0c0" />
<rect x="1301" y="982" width="110" height="3.5" fill="#222" />
<rect x="1312" y="980" width="4.5" height="8" fill="#555" />
<line x1="1302.5" y1="989" x2="1302.5" y2="993" stroke="#333" stroke-width="1" />
<line x1="1410.5" y1="989" x2="1410.5" y2="993" stroke="#333" stroke-width="1" />
<rect x="1416.5" y="978.5" width="16" height="16" fill="#eef0f4" stroke="#8a8a8a" stroke-width="0.8"/>
<path d="M1425.5,982 L1420.5,986.5 L1425.5,991 Z" fill="#1a3a9a"/><rect x="1426.5" y="982" width="2" height="9" fill="#1a3a9a"/>
<rect x="1433.5" y="978.5" width="16" height="16" fill="#eef0f4" stroke="#8a8a8a" stroke-width="0.8"/>
<rect x="1437.5" y="985.5" width="8" height="2" fill="#222"/><rect x="1440.5" y="982.5" width="2" height="8" fill="#222"/>
<rect x="1450.5" y="978.5" width="16" height="16" fill="#eef0f4" stroke="#8a8a8a" stroke-width="0.8"/>
<rect x="1454.5" y="986.5" width="8" height="2" fill="#222"/>
<rect x="1467.5" y="978.5" width="16" height="16" fill="#eef0f4" stroke="#8a8a8a" stroke-width="0.8"/>
<path d="M1474.0,982.5 L1470.0,986.5 L1474.0,990.5 Z M1477.0,982.5 L1481.0,986.5 L1477.0,990.5 Z" fill="#1a3a9a"/><rect x="1474.75" y="981" width="1.5" height="11" fill="#1a3a9a"/>
<rect x="1484.5" y="978.5" width="16" height="16" fill="#eef0f4" stroke="#8a8a8a" stroke-width="0.8"/>
<rect x="1489.5" y="983.5" width="6" height="6" fill="#1a3a9a" />
<rect x="1501.5" y="978.5" width="16" height="16" fill="#eef0f4" stroke="#8a8a8a" stroke-width="0.8"/>
<path d="M1507.0,982 L1513.0,986.5 L1507.0,991 Z" fill="#1a3a9a"/>
<rect x="1518.5" y="978.5" width="16" height="16" fill="#eef0f4" stroke="#8a8a8a" stroke-width="0.8"/>
<text x="1526.50" y="991.00" font-family="'Liberation Sans',sans-serif" font-size="12" font-weight="bold" fill="#222" text-anchor="middle">D</text>
<rect x="1535.5" y="978.5" width="16" height="16" fill="#eef0f4" stroke="#8a8a8a" stroke-width="0.8"/>
<text x="1543.50" y="991.00" font-family="'Liberation Sans',sans-serif" font-size="12" font-weight="bold" fill="#222" text-anchor="middle">L</text>
<rect x="1552.5" y="978.5" width="16" height="16" fill="#eef0f4" stroke="#8a8a8a" stroke-width="0.8"/>
<text x="1560.50" y="991.00" font-family="'Liberation Sans',sans-serif" font-size="12" font-weight="bold" fill="#222" text-anchor="middle">R</text>
<rect x="1569.5" y="978.5" width="16" height="16" fill="#eef0f4" stroke="#8a8a8a" stroke-width="0.8"/>
<circle cx="1576.5" cy="985.5" r="3.8" fill="none" stroke="#222" stroke-width="1.3" shape-rendering="auto"/><path d="M1579.3,988.3 L1582.5,991.5" stroke="#222" stroke-width="2"/><rect x="1574.5" y="985.0" width="4" height="1" fill="#222"/><rect x="1576.0" y="983.5" width="1" height="4" fill="#222"/>
<rect x="1586.5" y="978.5" width="16" height="16" fill="#eef0f4" stroke="#8a8a8a" stroke-width="0.8"/>
<path d="M1590.5,982.5 L1598.5,990.5 M1598.5,982.5 L1590.5,990.5" stroke="#222" stroke-width="1.8" shape-rendering="auto"/>
<rect x="1603.5" y="978.5" width="16" height="16" fill="#eef0f4" stroke="#8a8a8a" stroke-width="0.8"/>
<path d="M1610.5,982 L1615.5,986.5 L1610.5,991 Z" fill="#1a3a9a"/><rect x="1607.5" y="982" width="2" height="9" fill="#1a3a9a"/>
<line x1="8" y1="996.5" x2="1303" y2="996.5" stroke="#000" stroke-width="1" />
<rect x="11" y="997" width="55" height="18" fill="url(#btn2)"/><path d="M66.5,997 L66.5,1015.5 L11,1015.5" fill="none" stroke="#444" stroke-width="1"/><path d="M11,1015 L11,997 L66,997" fill="none" stroke="#fff" stroke-width="1"/>
<text x="14.50" y="1011.00" font-family="'Liberation Sans',sans-serif" font-size="13" font-weight="bold" fill="#000" textLength="46.00" lengthAdjust="spacingAndGlyphs">日経225</text>
<rect x="1303.4" y="997" width="77.59999999999991" height="18.7" fill="url(#btn2)"/><path d="M1380.5,997 L1380.5,1015.2 L1303.4,1015.2" fill="none" stroke="#333" stroke-width="1.2"/>
<text x="1342.20" y="1011.00" font-family="'Liberation Sans',sans-serif" font-size="12.5" font-weight="normal" fill="#111" textLength="66.00" lengthAdjust="spacingAndGlyphs" text-anchor="middle">チャート追加</text>
<rect x="1382.3" y="997" width="79.5" height="18.7" fill="url(#btn2)"/><path d="M1461.3,997 L1461.3,1015.2 L1382.3,1015.2" fill="none" stroke="#333" stroke-width="1.2"/>
<text x="1422.05" y="1011.00" font-family="'Liberation Sans',sans-serif" font-size="12.5" font-weight="normal" fill="#111" textLength="66.00" lengthAdjust="spacingAndGlyphs" text-anchor="middle">チャート削除</text>
<rect x="1462.5" y="997" width="78.90000000000009" height="18.7" fill="url(#btn2)"/><path d="M1540.9,997 L1540.9,1015.2 L1462.5,1015.2" fill="none" stroke="#333" stroke-width="1.2"/>
<text x="1501.95" y="1011.00" font-family="'Liberation Sans',sans-serif" font-size="12.5" font-weight="normal" fill="#111" textLength="48.00" lengthAdjust="spacingAndGlyphs" text-anchor="middle">表示切替</text>
<rect x="1542.6" y="997" width="78.40000000000009" height="18.7" fill="url(#btn2)"/><path d="M1620.5,997 L1620.5,1015.2 L1542.6,1015.2" fill="none" stroke="#333" stroke-width="1.2"/>
<text x="1581.80" y="1011.00" font-family="'Liberation Sans',sans-serif" font-size="12.5" font-weight="normal" fill="#111" textLength="48.00" lengthAdjust="spacingAndGlyphs" text-anchor="middle">画面設定</text>
<rect x="0" y="1019.5" width="1632" height="3" fill="#cfcfcf" />
<rect x="0" y="1022.5" width="1632" height="25" fill="#fff" />
<rect x="0" y="1022.5" width="1632" height="1" fill="#3a3a3a" />
<rect x="0" y="1046.3" width="1632" height="1.2" fill="#3a3a3a" />
<rect x="0" y="1047.5" width="1632" height="2.5" fill="#e4e4e4" />
<rect x="0" y="1022" width="29.5" height="25.8" fill="url(#sbar)"/>
<rect x="9" y="1027.5" width="14" height="14" fill="#fff" stroke="#999" stroke-width="1"/>
<rect x="29.5" y="1022.5" width="53.2" height="24.5" fill="#1a1a1a" />
<text x="56.30" y="1039.30" font-family="'Liberation Sans',sans-serif" font-size="12.5" font-weight="normal" fill="#f0f0f0" textLength="40.00" lengthAdjust="spacingAndGlyphs" text-anchor="middle">TOPIX</text>
<line x1="117.8" y1="1023" x2="117.8" y2="1046" stroke="#555" stroke-width="1" />
<text x="100.50" y="1039.30" font-family="'Liberation Sans',sans-serif" font-size="12.5" font-weight="normal" fill="#883050" text-anchor="middle">5</text>
<line x1="152.7" y1="1023" x2="152.7" y2="1046" stroke="#555" stroke-width="1" />
<text x="135.75" y="1039.30" font-family="'Liberation Sans',sans-serif" font-size="12.5" font-weight="normal" fill="#e088b8" text-anchor="middle">669</text>
<line x1="187.6" y1="1023" x2="187.6" y2="1046" stroke="#555" stroke-width="1" />
<text x="170.65" y="1039.30" font-family="'Liberation Sans',sans-serif" font-size="12.5" font-weight="normal" fill="#000" text-anchor="middle">125</text>
<line x1="222.7" y1="1023" x2="222.7" y2="1046" stroke="#555" stroke-width="1" />
<text x="205.65" y="1039.30" font-family="'Liberation Sans',sans-serif" font-size="12.5" font-weight="normal" fill="#30a8d8" text-anchor="middle">922</text>
<line x1="258.0" y1="1023" x2="258.0" y2="1046" stroke="#555" stroke-width="1" />
<text x="240.85" y="1039.30" font-family="'Liberation Sans',sans-serif" font-size="12.5" font-weight="normal" fill="#202090" text-anchor="middle">0</text>
<rect x="258.5" y="1022.5" width="3.8" height="24.5" fill="#444" />
<text x="263.60" y="1039.30" font-family="'Liberation Sans',sans-serif" font-size="12" font-weight="normal" fill="#888" textLength="32.00" lengthAdjust="spacingAndGlyphs">[15:00]</text>
<text x="303.00" y="1039.30" font-family="'Liberation Sans',sans-serif" font-size="12" font-weight="normal" fill="#111" textLength="39.00" lengthAdjust="spacingAndGlyphs">Jストック</text>
<text x="365.80" y="1039.30" font-family="'Liberation Sans',sans-serif" font-size="12" font-weight="normal" fill="#111" textLength="40.00" lengthAdjust="spacingAndGlyphs">1,244.14</text>
<path d="M430,1041 L436.25,1029 L442.5,1041 Z" fill="#e01010"/>
<text x="446.30" y="1039.30" font-family="'Liberation Sans',sans-serif" font-size="12" font-weight="normal" fill="#c82020" textLength="20.00" lengthAdjust="spacingAndGlyphs">3.32</text>
<text x="494.00" y="1039.30" font-family="'Liberation Sans',sans-serif" font-size="12" font-weight="normal" fill="#c82020" textLength="43.70" lengthAdjust="spacingAndGlyphs">（0.27%）</text>
<rect x="553.5" y="1022.5" width="19.5" height="24.5" fill="#1a1a1a" />
<rect x="556.5" y="1027.3" width="13.5" height="14" fill="#e8eaf0" stroke="#777" stroke-width="0.6"/><path d="M563.25,1029.5 L567.8,1034.5 L565.2,1034.5 L565.2,1039 L561.3,1039 L561.3,1034.5 L558.7,1034.5 Z" fill="#3a4658"/>
<rect x="1590.4" y="1022.5" width="22" height="25" fill="#2e2e2e" />
<rect x="1612.4" y="1019.5" width="19.6" height="30.5" fill="#c8c8c8" />
<rect x="1593" y="1028" width="8" height="7" rx="2" fill="#e8e8e8"/><rect x="1603" y="1028" width="8" height="7" rx="2" fill="#e8e8e8"/>
<rect x="1271" y="1033.3" width="353.5" height="14" fill="#a9b893" />
<rect x="1271" y="1033.3" width="353.5" height="1" fill="#c8d4b8" />
<g shape-rendering="auto">
<rect x="1272" y="1035" width="13" height="11" fill="#e4ead8" stroke="#7a8a6a" stroke-width="0.6"/>
<rect x="1389.5" y="1035" width="16" height="11" fill="#e4ead8" stroke="#7a8a6a" stroke-width="0.6"/>
<rect x="1500.6" y="1035" width="12" height="11" fill="#e4ead8" stroke="#7a8a6a" stroke-width="0.6"/>
<rect x="1573.5" y="1035" width="12" height="11" fill="#e4ead8" stroke="#7a8a6a" stroke-width="0.6"/>
<rect x="1589" y="1035" width="11" height="11" fill="#e4ead8" stroke="#7a8a6a" stroke-width="0.6"/>
<rect x="1601" y="1035" width="11" height="11" fill="#e4ead8" stroke="#7a8a6a" stroke-width="0.6"/>
<rect x="1612.5" y="1035" width="11" height="11" fill="#e4ead8" stroke="#7a8a6a" stroke-width="0.6"/>
<rect x="1288" y="1036" width="2" height="9" fill="#1e8a1e" />
<rect x="1291" y="1036" width="2" height="9" fill="#1e8a1e" />
<rect x="1294" y="1036" width="2" height="9" fill="#1e8a1e" />
<rect x="1410" y="1036" width="2" height="9" fill="#1e8a1e" />
<rect x="1515.5" y="1036" width="1.6" height="9" fill="#1e8a1e" />
<rect x="1517.95" y="1036" width="1.6" height="9" fill="#1e8a1e" />
<rect x="1520.4" y="1036" width="1.6" height="9" fill="#1e8a1e" />
<rect x="1522.85" y="1036" width="1.6" height="9" fill="#1e8a1e" />
<rect x="1525.3" y="1036" width="1.6" height="9" fill="#1e8a1e" />
<rect x="1527.75" y="1036" width="1.6" height="9" fill="#1e8a1e" />
<rect x="1530.2" y="1036" width="1.6" height="9" fill="#1e8a1e" />
<rect x="1532.65" y="1036" width="1.6" height="9" fill="#5ad05a" />
<rect x="1535.1" y="1036" width="1.6" height="9" fill="#5ad05a" />
<rect x="1537.55" y="1036" width="1.6" height="9" fill="#5ad05a" />
<rect x="1540.0" y="1036" width="1.6" height="9" fill="#d02020" />
<rect x="1542.45" y="1036" width="1.6" height="9" fill="#d02020" />
<text x="1320.60" y="1045.30" font-family="'Liberation Mono',monospace" font-size="12" font-weight="normal" fill="#2f7f2f" textLength="30.50" lengthAdjust="spacingAndGlyphs">341.91</text>
<text x="1355.00" y="1045.30" font-family="'Liberation Mono',monospace" font-size="12" font-weight="normal" fill="#2f7f2f" textLength="30.50" lengthAdjust="spacingAndGlyphs">039.48</text>
<text x="1439.80" y="1045.30" font-family="'Liberation Mono',monospace" font-size="12" font-weight="normal" fill="#2f7f2f" textLength="25.20" lengthAdjust="spacingAndGlyphs">641.1</text>
<text x="1471.40" y="1045.30" font-family="'Liberation Mono',monospace" font-size="12" font-weight="normal" fill="#2f7f2f" textLength="25.40" lengthAdjust="spacingAndGlyphs">453.3</text>
<text x="1547.00" y="1045.30" font-family="'Liberation Mono',monospace" font-size="12" font-weight="normal" fill="#2f7f2f" textLength="22.60" lengthAdjust="spacingAndGlyphs">100%</text>
<line x1="1352.5" y1="1036" x2="1352.5" y2="1046" stroke="#6a8a5a" stroke-width="0.8" stroke-dasharray="1 1"/>
<line x1="1469" y1="1036" x2="1469" y2="1046" stroke="#6a8a5a" stroke-width="0.8" stroke-dasharray="1 1"/>
</g>
</svg></body></html>
